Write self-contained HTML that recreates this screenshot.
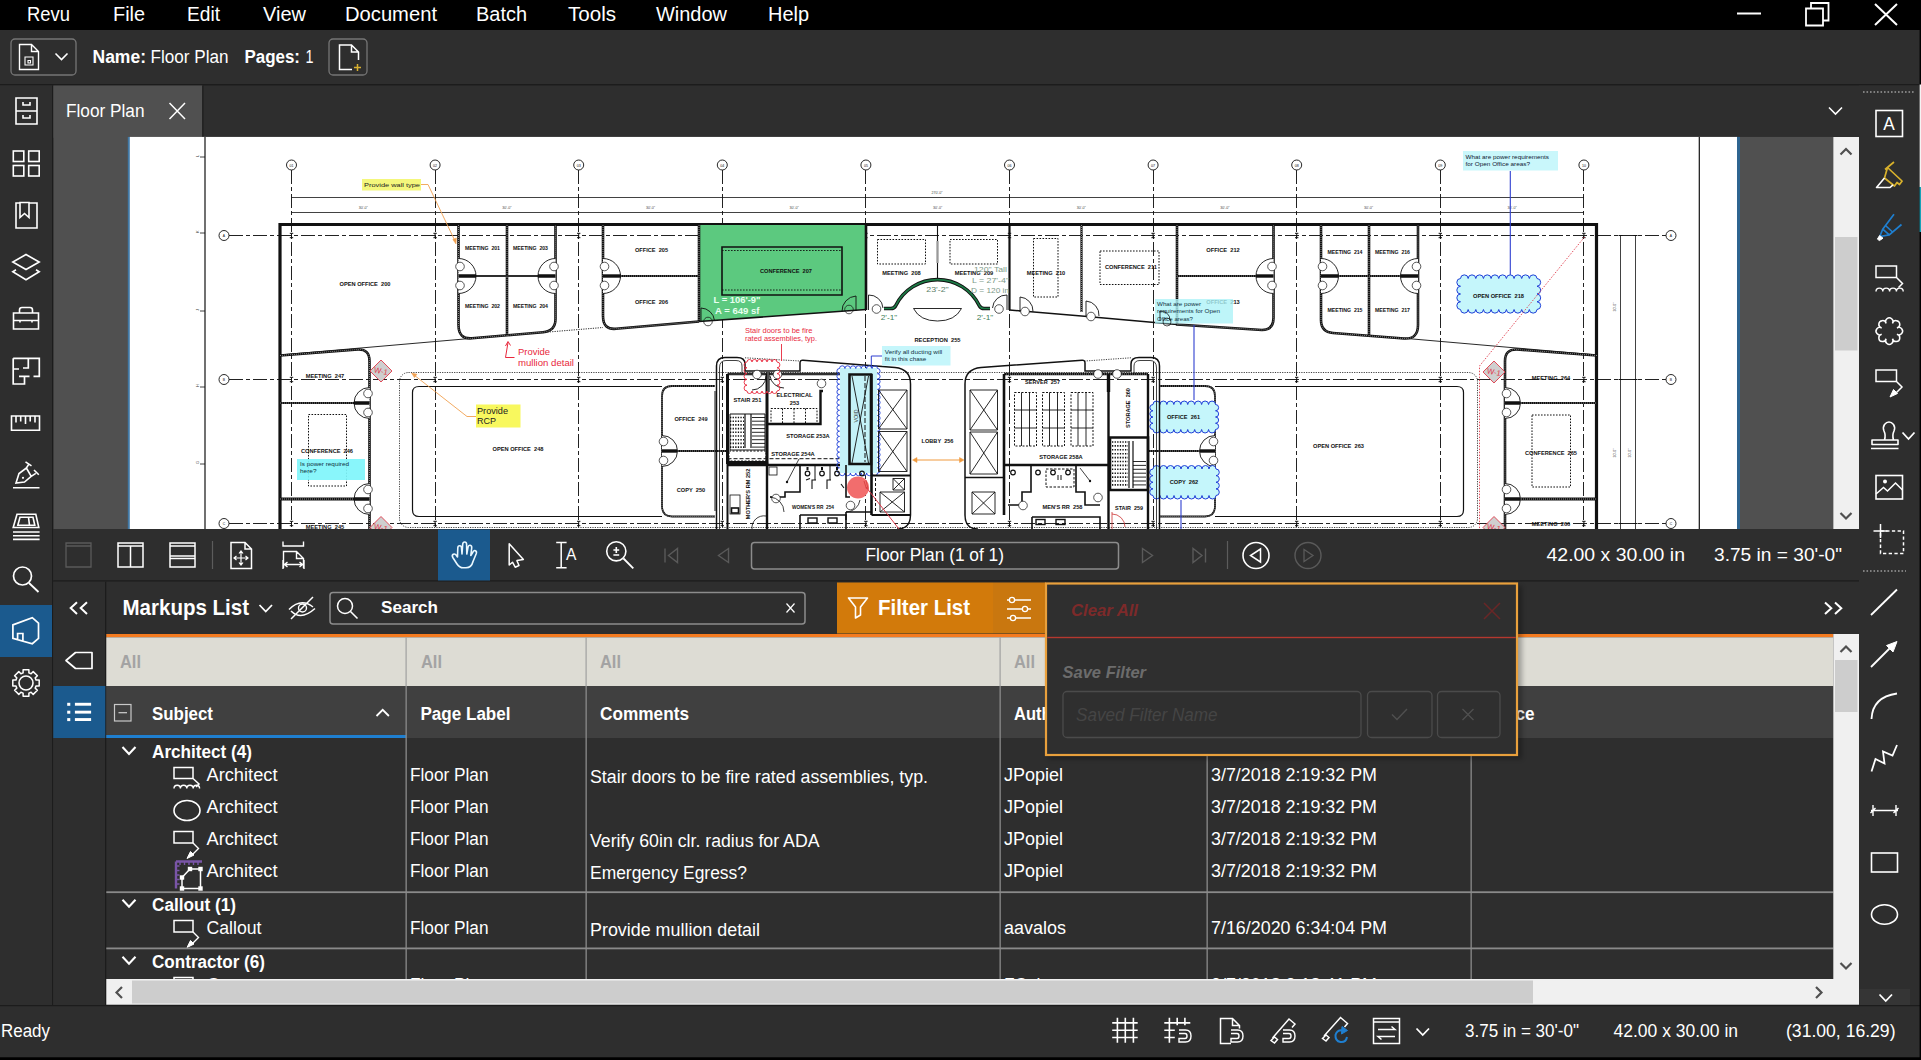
<!DOCTYPE html>
<html lang="en"><head><meta charset="utf-8"><title>Revu - Floor Plan</title>
<style>
html,body{margin:0;padding:0;background:#2e2e2e;overflow:hidden;font-family:"Liberation Sans",sans-serif;}
#app{position:absolute;left:0;top:0;width:1921px;height:1060px;overflow:hidden;}
svg text{white-space:pre;}
</style></head><body><div id="app">
<svg width="1921" height="1060" viewBox="0 0 1921 1060" font-family='"Liberation Sans", sans-serif' style="display:block">
<defs>
<clipPath id="docclip"><rect x="53.3" y="136.7" width="1780" height="392.3"/></clipPath>
<clipPath id="rowclip"><rect x="106" y="738" width="1727" height="241"/></clipPath>
<filter id="blur" x="-5%" y="-5%" width="110%" height="115%"><feGaussianBlur stdDeviation="2.5"/></filter>
</defs>
<rect x="0" y="0" width="1921" height="1060" fill="#2e2e2e" />
<g id="menubar"><rect x="0" y="0" width="1921" height="30" fill="#000" />
<text x="27" y="21" font-size="20.5" fill="#fff" textLength="43" lengthAdjust="spacingAndGlyphs">Revu</text>
<text x="113" y="21" font-size="20.5" fill="#fff" textLength="32" lengthAdjust="spacingAndGlyphs">File</text>
<text x="187" y="21" font-size="20.5" fill="#fff" textLength="33" lengthAdjust="spacingAndGlyphs">Edit</text>
<text x="263" y="21" font-size="20.5" fill="#fff" textLength="43" lengthAdjust="spacingAndGlyphs">View</text>
<text x="345" y="21" font-size="20.5" fill="#fff" textLength="92" lengthAdjust="spacingAndGlyphs">Document</text>
<text x="476" y="21" font-size="20.5" fill="#fff" textLength="51" lengthAdjust="spacingAndGlyphs">Batch</text>
<text x="568" y="21" font-size="20.5" fill="#fff" textLength="48" lengthAdjust="spacingAndGlyphs">Tools</text>
<text x="656" y="21" font-size="20.5" fill="#fff" textLength="71" lengthAdjust="spacingAndGlyphs">Window</text>
<text x="768" y="21" font-size="20.5" fill="#fff" textLength="41" lengthAdjust="spacingAndGlyphs">Help</text>
<line x1="1737" y1="13.5" x2="1761" y2="13.5" stroke="#fff" stroke-width="2" />
<path d="M1806 8.5 h17 v17 h-17 z M1811 8 v-5 h17.5 v17.5 h-5" stroke="#fff" stroke-width="1.8" fill="none" />
<path d="M1875 4 L1897 25 M1897 4 L1875 25" stroke="#fff" stroke-width="2" fill="none" /></g>
<g id="toolbar"><rect x="0" y="30" width="1921" height="54" fill="#2e2e2e" />
<rect x="0" y="84" width="1921" height="1.5" fill="#1c1c1c" />
<rect x="11" y="39" width="65" height="36" fill="none" rx="4" stroke="#767676" stroke-width="1.3"/>
<path d="M19.5 44.5 h12 l7 7 v18 h-19 z M31.5 44.5 v7 h7" stroke="#fff" stroke-width="1.4" fill="none" />
<path d="M25 57 h8 v8 h-8 z M28 60.5 h2.5 v2.5 h-2.5 z" stroke="#fff" stroke-width="1.1" fill="none" />
<path d="M55.5 53.5 l6 6 l6 -6" stroke="#fff" stroke-width="1.6" fill="none" />
<text x="92.5" y="62.8" font-size="18" fill="#fff" textLength="53.5" lengthAdjust="spacingAndGlyphs" font-weight="bold">Name:</text>
<text x="150.5" y="62.8" font-size="18" fill="#fff" textLength="78" lengthAdjust="spacingAndGlyphs">Floor Plan</text>
<text x="244.5" y="62.8" font-size="18" fill="#fff" textLength="55.5" lengthAdjust="spacingAndGlyphs" font-weight="bold">Pages:</text>
<text x="305.5" y="62.8" font-size="18" fill="#fff" textLength="8" lengthAdjust="spacingAndGlyphs">1</text>
<rect x="329" y="39" width="38" height="36" fill="none" rx="4" stroke="#767676" stroke-width="1.3"/>
<path d="M339.5 45 h12 l7 7 v17.5 h-19 z M351.5 45 v7 h7" stroke="#fff" stroke-width="1.5" fill="none" />
<rect x="352" y="60" width="8" height="12" fill="#2e2e2e" />
<path d="M357.5 64 v7 M354 67.5 h7" stroke="#d8b030" stroke-width="1.5" fill="none" /></g>
<g id="leftbar"><rect x="0" y="85.5" width="52" height="920" fill="#2e2e2e" />
<rect x="52" y="85.5" width="1.3" height="920" fill="#1c1c1c" />
<rect x="0" y="605" width="52" height="52" fill="#1b5a8e" />
<path d="M16 98 h21 v26 h-21 z M16 111 h21 M23 102 v3 h7 v-3 M23 115 v3 h7 v-3" stroke="#fff" stroke-width="1.6" fill="none" />
<rect x="13.3" y="151" width="10.5" height="10.5" fill="none" stroke="#fff" stroke-width="1.6"/>
<rect x="28.7" y="151" width="10.5" height="10.5" fill="none" stroke="#fff" stroke-width="1.6"/>
<rect x="13.3" y="165.5" width="10.5" height="10.5" fill="none" stroke="#fff" stroke-width="1.6"/>
<rect x="28.7" y="165.5" width="10.5" height="10.5" fill="none" stroke="#fff" stroke-width="1.6"/>
<path d="M20 203 h-4 v25 h21 v-25 h-8 M20 202.5 v15 l4.5 -4 l4.5 4 v-15 z" stroke="#fff" stroke-width="1.6" fill="none" />
<path d="M26 254.5 l13.2 7.5 l-13.2 7.5 l-13.2 -7.5 z M16 269.8 l-3.2 1.9 l13.2 8 l13.2 -8 l-3.2 -1.9" stroke="#fff" stroke-width="1.6" fill="none" />
<path d="M13.5 313 h25 v16 h-25 z M19.5 313 v-3 q0 -2.5 2.5 -2.5 h8 q2.5 0 2.5 2.5 v3 M13.5 320.5 h25 M20 320.5 v2 M32 320.5 v2" stroke="#fff" stroke-width="1.6" fill="none" />
<path d="M13.2 358.3 H39.3 V376.3 H33.5 M29.5 376.3 H19 M24.5 376.3 V384 H13.2 V358.3 M28.3 358.3 V368 H23 M13.2 369 H19" stroke="#fff" stroke-width="1.7" fill="none" />
<path d="M11.5 416 h28 v14.3 h-28 z M16 416 v6.5 M20.7 416 v5.5 M25.5 416 v8 M30.2 416 v5.5 M35 416 v6.5" stroke="#fff" stroke-width="1.6" fill="none" />
<path d="M13 487.8 h26.5 M16 483 L19 473.6 L26.4 468 L31.2 476.4 L24.5 482 Z M26.4 468 L29 463.8 M25.5 461.8 L31.5 465.8 M31.2 476.4 L35.8 473.3 M34 470 L38.8 474.8" stroke="#fff" stroke-width="1.6" fill="none" />
<circle cx="23" cy="477.8" r="1.1" fill="#fff"/>
<path d="M17 514.3 h18.8 l3 13.2 h-25.6 z M20 517.3 h13 l1.8 8 h-17 z M28.5 517.3 l1 8 M13 532 h26.6 M13 535.8 h26.6 M13 539.4 h26.6" stroke="#fff" stroke-width="1.6" fill="none" />
<circle cx="22.5" cy="576" r="9" fill="none" stroke="#fff" stroke-width="1.7"/>
<line x1="29" y1="583" x2="38.5" y2="592" stroke="#fff" stroke-width="1.8" />
<path d="M12.9 624.9 L32.3 617.7 L38.5 623.1 V638.3 L32.3 643.7 L12.9 638.3 Z M17.6 639.5 V633.5 H22.9 V641" stroke="#fff" stroke-width="1.7" fill="none" />
<path d="M23.1 669.8 L28.9 669.8 L28.9 672.9 L31.1 673.8 L33.2 671.6 L37.4 675.8 L35.2 677.9 L36.1 680.1 L39.2 680.1 L39.2 685.9 L36.1 685.9 L35.2 688.1 L37.4 690.2 L33.2 694.4 L31.1 692.2 L28.9 693.1 L28.9 696.2 L23.1 696.2 L23.1 693.1 L20.9 692.2 L18.8 694.4 L14.6 690.2 L16.8 688.1 L15.9 685.9 L12.8 685.9 L12.8 680.1 L15.9 680.1 L16.8 677.9 L14.6 675.8 L18.8 671.6 L20.9 673.8 L23.1 672.9 Z" stroke="#fff" stroke-width="1.5" fill="none" stroke-linejoin="round"/>
<circle cx="26" cy="683" r="7" fill="none" stroke="#fff" stroke-width="1.6"/></g>
<g id="tabs"><rect x="53.3" y="85.5" width="149" height="52" fill="#505050" />
<rect x="202.3" y="85.5" width="1.2" height="51.5" fill="#1c1c1c" />
<text x="66" y="116.6" font-size="18" fill="#fff" textLength="78.5" lengthAdjust="spacingAndGlyphs">Floor Plan</text>
<path d="M169.5 103 L185 119 M185 103 L169.5 119" stroke="#fff" stroke-width="1.5" fill="none" />
<path d="M1829 107.5 l6.5 6.5 l6.5 -6.5" stroke="#fff" stroke-width="1.6" fill="none" /></g>
<g id="document" clip-path="url(#docclip)" font-family='"Liberation Sans", sans-serif'><rect x="53.3" y="136.7" width="1780" height="392.3" fill="#505050" />
<rect x="127.8" y="136.7" width="3" height="392.3" fill="#4179a6" />
<rect x="1736" y="136.7" width="4" height="392.3" fill="#2f6590" />
<rect x="129.8" y="136.7" width="1607.2" height="392.3" fill="#fff" />
<line x1="205" y1="137" x2="205" y2="529" stroke="#111" stroke-width="1.2" />
<line x1="1699.3" y1="137" x2="1699.3" y2="529" stroke="#111" stroke-width="1.2" />
<line x1="200" y1="157" x2="205" y2="157" stroke="#111" stroke-width="0.8" />
<text x="197" y="155" font-size="4" fill="#333" transform="rotate(-90 199 155)">L</text>
<line x1="200" y1="233" x2="205" y2="233" stroke="#111" stroke-width="0.8" />
<text x="197" y="231" font-size="4" fill="#333" transform="rotate(-90 199 231)">K</text>
<line x1="200" y1="311" x2="205" y2="311" stroke="#111" stroke-width="0.8" />
<text x="197" y="309" font-size="4" fill="#333" transform="rotate(-90 199 309)">J</text>
<line x1="200" y1="387" x2="205" y2="387" stroke="#111" stroke-width="0.8" />
<text x="197" y="385" font-size="4" fill="#333" transform="rotate(-90 199 385)">H</text>
<line x1="200" y1="464" x2="205" y2="464" stroke="#111" stroke-width="0.8" />
<text x="197" y="462" font-size="4" fill="#333" transform="rotate(-90 199 462)">G</text>
<circle cx="291.5" cy="165" r="5" fill="#fff" stroke="#111" stroke-width="0.9"/>
<text x="291.5" y="166.5" font-size="3.6" fill="#111" text-anchor="middle">01</text>
<line x1="291.5" y1="170" x2="291.5" y2="529" stroke="#222" stroke-width="1" stroke-dasharray="14 3 4 3" shape-rendering="crispEdges"/>
<circle cx="435.1" cy="165" r="5" fill="#fff" stroke="#111" stroke-width="0.9"/>
<text x="435.1" y="166.5" font-size="3.6" fill="#111" text-anchor="middle">02</text>
<line x1="435.1" y1="170" x2="435.1" y2="529" stroke="#222" stroke-width="1" stroke-dasharray="14 3 4 3" shape-rendering="crispEdges"/>
<circle cx="578.7" cy="165" r="5" fill="#fff" stroke="#111" stroke-width="0.9"/>
<text x="578.7" y="166.5" font-size="3.6" fill="#111" text-anchor="middle">03</text>
<line x1="578.7" y1="170" x2="578.7" y2="529" stroke="#222" stroke-width="1" stroke-dasharray="14 3 4 3" shape-rendering="crispEdges"/>
<circle cx="722.3" cy="165" r="5" fill="#fff" stroke="#111" stroke-width="0.9"/>
<text x="722.3" y="166.5" font-size="3.6" fill="#111" text-anchor="middle">04</text>
<line x1="722.3" y1="170" x2="722.3" y2="529" stroke="#222" stroke-width="1" stroke-dasharray="14 3 4 3" shape-rendering="crispEdges"/>
<circle cx="865.9" cy="165" r="5" fill="#fff" stroke="#111" stroke-width="0.9"/>
<text x="865.9" y="166.5" font-size="3.6" fill="#111" text-anchor="middle">05</text>
<line x1="865.9" y1="170" x2="865.9" y2="529" stroke="#222" stroke-width="1" stroke-dasharray="14 3 4 3" shape-rendering="crispEdges"/>
<circle cx="1009.5" cy="165" r="5" fill="#fff" stroke="#111" stroke-width="0.9"/>
<text x="1009.5" y="166.5" font-size="3.6" fill="#111" text-anchor="middle">06</text>
<line x1="1009.5" y1="170" x2="1009.5" y2="529" stroke="#222" stroke-width="1" stroke-dasharray="14 3 4 3" shape-rendering="crispEdges"/>
<circle cx="1153.1" cy="165" r="5" fill="#fff" stroke="#111" stroke-width="0.9"/>
<text x="1153.1" y="166.5" font-size="3.6" fill="#111" text-anchor="middle">07</text>
<line x1="1153.1" y1="170" x2="1153.1" y2="529" stroke="#222" stroke-width="1" stroke-dasharray="14 3 4 3" shape-rendering="crispEdges"/>
<circle cx="1296.7" cy="165" r="5" fill="#fff" stroke="#111" stroke-width="0.9"/>
<text x="1296.6999999999998" y="166.5" font-size="3.6" fill="#111" text-anchor="middle">08</text>
<line x1="1296.6999999999998" y1="170" x2="1296.6999999999998" y2="529" stroke="#222" stroke-width="1" stroke-dasharray="14 3 4 3" shape-rendering="crispEdges"/>
<circle cx="1440.3" cy="165" r="5" fill="#fff" stroke="#111" stroke-width="0.9"/>
<text x="1440.3" y="166.5" font-size="3.6" fill="#111" text-anchor="middle">09</text>
<line x1="1440.3" y1="170" x2="1440.3" y2="529" stroke="#222" stroke-width="1" stroke-dasharray="14 3 4 3" shape-rendering="crispEdges"/>
<circle cx="1583.9" cy="165" r="5" fill="#fff" stroke="#111" stroke-width="0.9"/>
<text x="1583.8999999999999" y="166.5" font-size="3.6" fill="#111" text-anchor="middle">10</text>
<line x1="1583.8999999999999" y1="170" x2="1583.8999999999999" y2="529" stroke="#222" stroke-width="1" stroke-dasharray="14 3 4 3" shape-rendering="crispEdges"/>
<line x1="291.5" y1="197.5" x2="1583.8999999999999" y2="197.5" stroke="#111" stroke-width="0.8" />
<line x1="291.5" y1="212.5" x2="1583.8999999999999" y2="212.5" stroke="#111" stroke-width="0.8" />
<text x="363.3" y="208.5" font-size="3.6" fill="#444" text-anchor="middle">30&#x27;-0&quot;</text>
<text x="506.90000000000003" y="208.5" font-size="3.6" fill="#444" text-anchor="middle">30&#x27;-0&quot;</text>
<text x="650.5" y="208.5" font-size="3.6" fill="#444" text-anchor="middle">30&#x27;-0&quot;</text>
<text x="794.0999999999999" y="208.5" font-size="3.6" fill="#444" text-anchor="middle">30&#x27;-0&quot;</text>
<text x="937.7" y="208.5" font-size="3.6" fill="#444" text-anchor="middle">30&#x27;-0&quot;</text>
<text x="1081.3" y="208.5" font-size="3.6" fill="#444" text-anchor="middle">30&#x27;-0&quot;</text>
<text x="1224.8999999999999" y="208.5" font-size="3.6" fill="#444" text-anchor="middle">30&#x27;-0&quot;</text>
<text x="1368.5" y="208.5" font-size="3.6" fill="#444" text-anchor="middle">30&#x27;-0&quot;</text>
<text x="1512.1" y="208.5" font-size="3.6" fill="#444" text-anchor="middle">30&#x27;-0&quot;</text>
<text x="937" y="193.5" font-size="3.6" fill="#444" text-anchor="middle">270&#x27;-0&quot;</text>
<circle cx="224" cy="235.5" r="5" fill="#fff" stroke="#111" stroke-width="0.9"/>
<text x="224" y="236.8" font-size="3.4" fill="#111" text-anchor="middle">A</text>
<circle cx="1671" cy="235.5" r="5" fill="#fff" stroke="#111" stroke-width="0.9"/>
<text x="1671" y="236.8" font-size="3.4" fill="#111" text-anchor="middle">A</text>
<line x1="229" y1="235.5" x2="1666" y2="235.5" stroke="#222" stroke-width="1" stroke-dasharray="14 3 4 3" shape-rendering="crispEdges"/>
<path d="M289.8 233.3 h3.4 M289.8 237.7 h3.4 M291.5 233.3 v4.4" stroke="#111" stroke-width="1" fill="none" />
<path d="M433.4 233.3 h3.4 M433.4 237.7 h3.4 M435.1 233.3 v4.4" stroke="#111" stroke-width="1" fill="none" />
<path d="M577.0 233.3 h3.4 M577.0 237.7 h3.4 M578.7 233.3 v4.4" stroke="#111" stroke-width="1" fill="none" />
<path d="M720.6 233.3 h3.4 M720.6 237.7 h3.4 M722.3 233.3 v4.4" stroke="#111" stroke-width="1" fill="none" />
<path d="M864.2 233.3 h3.4 M864.2 237.7 h3.4 M865.9 233.3 v4.4" stroke="#111" stroke-width="1" fill="none" />
<path d="M1007.8 233.3 h3.4 M1007.8 237.7 h3.4 M1009.5 233.3 v4.4" stroke="#111" stroke-width="1" fill="none" />
<path d="M1151.4 233.3 h3.4 M1151.4 237.7 h3.4 M1153.1 233.3 v4.4" stroke="#111" stroke-width="1" fill="none" />
<path d="M1295.0 233.3 h3.4 M1295.0 237.7 h3.4 M1296.7 233.3 v4.4" stroke="#111" stroke-width="1" fill="none" />
<path d="M1438.6 233.3 h3.4 M1438.6 237.7 h3.4 M1440.3 233.3 v4.4" stroke="#111" stroke-width="1" fill="none" />
<path d="M1582.2 233.3 h3.4 M1582.2 237.7 h3.4 M1583.9 233.3 v4.4" stroke="#111" stroke-width="1" fill="none" />
<circle cx="224" cy="379.5" r="5" fill="#fff" stroke="#111" stroke-width="0.9"/>
<text x="224" y="380.8" font-size="3.4" fill="#111" text-anchor="middle">B</text>
<circle cx="1671" cy="379.5" r="5" fill="#fff" stroke="#111" stroke-width="0.9"/>
<text x="1671" y="380.8" font-size="3.4" fill="#111" text-anchor="middle">B</text>
<line x1="229" y1="379.5" x2="1666" y2="379.5" stroke="#222" stroke-width="1" stroke-dasharray="14 3 4 3" shape-rendering="crispEdges"/>
<path d="M289.8 377.3 h3.4 M289.8 381.7 h3.4 M291.5 377.3 v4.4" stroke="#111" stroke-width="1" fill="none" />
<path d="M433.4 377.3 h3.4 M433.4 381.7 h3.4 M435.1 377.3 v4.4" stroke="#111" stroke-width="1" fill="none" />
<path d="M577.0 377.3 h3.4 M577.0 381.7 h3.4 M578.7 377.3 v4.4" stroke="#111" stroke-width="1" fill="none" />
<path d="M720.6 377.3 h3.4 M720.6 381.7 h3.4 M722.3 377.3 v4.4" stroke="#111" stroke-width="1" fill="none" />
<path d="M864.2 377.3 h3.4 M864.2 381.7 h3.4 M865.9 377.3 v4.4" stroke="#111" stroke-width="1" fill="none" />
<path d="M1007.8 377.3 h3.4 M1007.8 381.7 h3.4 M1009.5 377.3 v4.4" stroke="#111" stroke-width="1" fill="none" />
<path d="M1151.4 377.3 h3.4 M1151.4 381.7 h3.4 M1153.1 377.3 v4.4" stroke="#111" stroke-width="1" fill="none" />
<path d="M1295.0 377.3 h3.4 M1295.0 381.7 h3.4 M1296.7 377.3 v4.4" stroke="#111" stroke-width="1" fill="none" />
<path d="M1438.6 377.3 h3.4 M1438.6 381.7 h3.4 M1440.3 377.3 v4.4" stroke="#111" stroke-width="1" fill="none" />
<path d="M1582.2 377.3 h3.4 M1582.2 381.7 h3.4 M1583.9 377.3 v4.4" stroke="#111" stroke-width="1" fill="none" />
<circle cx="224" cy="523.5" r="5" fill="#fff" stroke="#111" stroke-width="0.9"/>
<text x="224" y="524.8" font-size="3.4" fill="#111" text-anchor="middle">C</text>
<circle cx="1671" cy="523.5" r="5" fill="#fff" stroke="#111" stroke-width="0.9"/>
<text x="1671" y="524.8" font-size="3.4" fill="#111" text-anchor="middle">C</text>
<line x1="229" y1="523.5" x2="1666" y2="523.5" stroke="#222" stroke-width="1" stroke-dasharray="14 3 4 3" shape-rendering="crispEdges"/>
<path d="M289.8 521.3 h3.4 M289.8 525.7 h3.4 M291.5 521.3 v4.4" stroke="#111" stroke-width="1" fill="none" />
<path d="M433.4 521.3 h3.4 M433.4 525.7 h3.4 M435.1 521.3 v4.4" stroke="#111" stroke-width="1" fill="none" />
<path d="M577.0 521.3 h3.4 M577.0 525.7 h3.4 M578.7 521.3 v4.4" stroke="#111" stroke-width="1" fill="none" />
<path d="M720.6 521.3 h3.4 M720.6 525.7 h3.4 M722.3 521.3 v4.4" stroke="#111" stroke-width="1" fill="none" />
<path d="M864.2 521.3 h3.4 M864.2 525.7 h3.4 M865.9 521.3 v4.4" stroke="#111" stroke-width="1" fill="none" />
<path d="M1007.8 521.3 h3.4 M1007.8 525.7 h3.4 M1009.5 521.3 v4.4" stroke="#111" stroke-width="1" fill="none" />
<path d="M1151.4 521.3 h3.4 M1151.4 525.7 h3.4 M1153.1 521.3 v4.4" stroke="#111" stroke-width="1" fill="none" />
<path d="M1295.0 521.3 h3.4 M1295.0 525.7 h3.4 M1296.7 521.3 v4.4" stroke="#111" stroke-width="1" fill="none" />
<path d="M1438.6 521.3 h3.4 M1438.6 525.7 h3.4 M1440.3 521.3 v4.4" stroke="#111" stroke-width="1" fill="none" />
<path d="M1582.2 521.3 h3.4 M1582.2 525.7 h3.4 M1583.9 521.3 v4.4" stroke="#111" stroke-width="1" fill="none" />
<line x1="1620.5" y1="235.5" x2="1620.5" y2="529" stroke="#111" stroke-width="0.8" />
<line x1="1635.5" y1="235.5" x2="1635.5" y2="529" stroke="#111" stroke-width="0.8" />
<text x="1616" y="307" font-size="3.6" fill="#444" text-anchor="middle" transform="rotate(-90 1616 307)">30&#x27;-0&quot;</text>
<text x="1616" y="453" font-size="3.6" fill="#444" text-anchor="middle" transform="rotate(-90 1616 453)">30&#x27;-0&quot;</text>
<text x="1631" y="453" font-size="3.6" fill="#444" text-anchor="middle" transform="rotate(-90 1631 453)">30&#x27;-0&quot;</text>
<path d="M1618.5 235.5 h4 M1633.5 235.5 h4" stroke="#111" stroke-width="1.2" fill="none" />
<path d="M1618.5 379.5 h4 M1633.5 379.5 h4" stroke="#111" stroke-width="1.2" fill="none" />
<path d="M1618.5 523.5 h4 M1633.5 523.5 h4" stroke="#111" stroke-width="1.2" fill="none" />
<path d="M280 529 V224.5 H1596.5 V529" stroke="#111" stroke-width="3.2" fill="none" />
<line x1="280" y1="355" x2="470" y2="338.5" stroke="#111" stroke-width="0.9" />
<line x1="545" y1="332.3" x2="603" y2="327.5" stroke="#111" stroke-width="0.9" stroke-dasharray="1.2 1.2"/>
<line x1="1597" y1="355" x2="1407" y2="338.5" stroke="#111" stroke-width="0.9" />
<path d="M458.5 225 V325 Q458.5 339.5 472 338.3 L543 332.2 Q555.5 331 555.5 319 V225" stroke="#111" stroke-width="2.6" fill="none" stroke-linejoin="round"/>
<path d="M458.5 225 V325 Q458.5 339.5 472 338.3 L543 332.2 Q555.5 331 555.5 319 V225" stroke="#bbb" stroke-width="0.7" fill="none" stroke-dasharray="1 1"/>
<path d="M507 225 V336" stroke="#111" stroke-width="2.6" fill="none" stroke-linejoin="round"/>
<path d="M507 225 V336" stroke="#bbb" stroke-width="0.7" fill="none" stroke-dasharray="1 1"/>
<path d="M458.5 276 H555.5" stroke="#111" stroke-width="2.2" fill="none" stroke-linejoin="round"/>
<path d="M458.5 276 H555.5" stroke="#bbb" stroke-width="0.7" fill="none" stroke-dasharray="1 1"/>
<path d="M458.5 258.5 A17.5 17.5 0 0 1 458.5 293.5" stroke="#111" stroke-width="0.9" fill="#fff" />
<circle cx="460.0" cy="266.5" r="4.3" fill="#fff" stroke="#111" stroke-width="0.7"/>
<circle cx="460.0" cy="285.5" r="4.3" fill="#fff" stroke="#111" stroke-width="0.7"/>
<path d="M555.5 258.5 A17.5 17.5 0 0 0 555.5 293.5" stroke="#111" stroke-width="0.9" fill="#fff" />
<circle cx="554.0" cy="266.5" r="4.3" fill="#fff" stroke="#111" stroke-width="0.7"/>
<circle cx="554.0" cy="285.5" r="4.3" fill="#fff" stroke="#111" stroke-width="0.7"/>
<path d="M458.5 276 H476 M555.5 276 H538" stroke="#111" stroke-width="3.4" fill="none" />
<text x="482.5" y="249.5" font-size="5" fill="#111" textLength="35" lengthAdjust="spacingAndGlyphs" font-weight="bold" text-anchor="middle">MEETING  201</text>
<text x="530.5" y="249.5" font-size="5" fill="#111" textLength="35" lengthAdjust="spacingAndGlyphs" font-weight="bold" text-anchor="middle">MEETING  203</text>
<text x="482.5" y="307.5" font-size="5" fill="#111" textLength="35" lengthAdjust="spacingAndGlyphs" font-weight="bold" text-anchor="middle">MEETING  202</text>
<text x="530.5" y="307.5" font-size="5" fill="#111" textLength="35" lengthAdjust="spacingAndGlyphs" font-weight="bold" text-anchor="middle">MEETING  204</text>
<text x="365" y="286" font-size="5.2" fill="#111" textLength="51" lengthAdjust="spacingAndGlyphs" font-weight="bold" text-anchor="middle">OPEN OFFICE  200</text>
<path d="M603 225 V316 Q603 330 616 328.8 L699 321.5" stroke="#111" stroke-width="2.6" fill="none" stroke-linejoin="round"/>
<path d="M603 225 V316 Q603 330 616 328.8 L699 321.5" stroke="#bbb" stroke-width="0.7" fill="none" stroke-dasharray="1 1"/>
<path d="M603 276 H699" stroke="#111" stroke-width="2.2" fill="none" stroke-linejoin="round"/>
<path d="M603 276 H699" stroke="#bbb" stroke-width="0.7" fill="none" stroke-dasharray="1 1"/>
<path d="M603 258.5 A17.5 17.5 0 0 1 603 293.5" stroke="#111" stroke-width="0.9" fill="#fff" />
<circle cx="604.5" cy="266.5" r="4.3" fill="#fff" stroke="#111" stroke-width="0.7"/>
<circle cx="604.5" cy="285.5" r="4.3" fill="#fff" stroke="#111" stroke-width="0.7"/>
<path d="M603 276 H621" stroke="#111" stroke-width="3.4" fill="none" />
<text x="651.5" y="251.5" font-size="5.2" fill="#111" textLength="33" lengthAdjust="spacingAndGlyphs" font-weight="bold" text-anchor="middle">OFFICE  205</text>
<text x="651.5" y="303.5" font-size="5.2" fill="#111" textLength="33" lengthAdjust="spacingAndGlyphs" font-weight="bold" text-anchor="middle">OFFICE  206</text>
<path d="M699 225 H866 V309.5 L699 321.5 Z" stroke="none" stroke-width="0" fill="#5cc97f" />
<path d="M699 225 V321.5" stroke="#111" stroke-width="2.6" fill="none" stroke-linejoin="round"/>
<path d="M699 225 V321.5" stroke="#bbb" stroke-width="0.7" fill="none" stroke-dasharray="1 1"/>
<path d="M699 321.5 L866 309.5" stroke="#111" stroke-width="1.6" fill="none" />
<path d="M722 247 H842 V295 H722 Z" stroke="#111" stroke-width="1.6" fill="none" />
<path d="M722 250.5 H842 M722 290 H842" stroke="#111" stroke-width="0.9" fill="none" stroke-dasharray="1.6 1.4"/>
<text x="786" y="273.3" font-size="5.4" fill="#111" textLength="52" lengthAdjust="spacingAndGlyphs" font-weight="bold" text-anchor="middle">CONFERENCE  207</text>
<text x="713.5" y="303" font-size="8.3" fill="#e8fff0" textLength="47" lengthAdjust="spacingAndGlyphs" font-weight="bold">L = 106&#x27;-9&quot;</text>
<text x="715" y="313.8" font-size="8.3" fill="#e8fff0" textLength="44.5" lengthAdjust="spacingAndGlyphs" font-weight="bold">A = 649 sf</text>
<path d="M701 322 V308 A14 14 0 0 1 714.5 320.5" stroke="#111" stroke-width="0.9" fill="none" />
<circle cx="708" cy="321.5" r="4.3" fill="none" stroke="#111" stroke-width="0.7"/>
<path d="M856 311 V296 A15 15 0 0 0 842 311.5" stroke="#111" stroke-width="0.9" fill="none" />
<circle cx="849" cy="309.5" r="4.3" fill="none" stroke="#111" stroke-width="0.7"/>
<path d="M866 225 V310" stroke="#111" stroke-width="2.6" fill="none" />
<path d="M1009.5 225 V310" stroke="#111" stroke-width="2.2" fill="none" />
<path d="M937.5 225 V279" stroke="#111" stroke-width="1.1" fill="none" />
<path d="M937.5 241 V263" stroke="#999" stroke-width="2.2" fill="none" />
<path d="M1081.5 225 V312" stroke="#111" stroke-width="2.2" fill="none" stroke-linejoin="round"/>
<path d="M1081.5 225 V312" stroke="#bbb" stroke-width="0.7" fill="none" stroke-dasharray="1 1"/>
<rect x="877.5" y="239.5" width="48.0" height="24.5" fill="none" stroke="#111" stroke-width="1" stroke-dasharray="1.6 1.4"/>
<rect x="950" y="239.5" width="47.5" height="24.5" fill="none" stroke="#111" stroke-width="1" stroke-dasharray="1.6 1.4"/>
<rect x="1033.5" y="238.5" width="24.5" height="58.5" fill="none" stroke="#111" stroke-width="1" stroke-dasharray="1.6 1.4"/>
<rect x="1100" y="251" width="59" height="33.5" fill="none" stroke="#111" stroke-width="1" stroke-dasharray="1.6 1.4"/>
<text x="901.5" y="275" font-size="5.2" fill="#111" textLength="38.5" lengthAdjust="spacingAndGlyphs" font-weight="bold" text-anchor="middle">MEETING  208</text>
<text x="974" y="275" font-size="5.2" fill="#111" textLength="38.5" lengthAdjust="spacingAndGlyphs" font-weight="bold" text-anchor="middle">MEETING  209</text>
<text x="1046" y="275" font-size="5.2" fill="#111" textLength="38.5" lengthAdjust="spacingAndGlyphs" font-weight="bold" text-anchor="middle">MEETING  210</text>
<text x="1131" y="268.5" font-size="5.4" fill="#111" textLength="52" lengthAdjust="spacingAndGlyphs" font-weight="bold" text-anchor="middle">CONFERENCE  211</text>
<path d="M866 309.5 L1009.5 309.5" stroke="none" stroke-width="0" fill="none" />
<path d="M884 308.5 H891 Q894 308.5 895.5 306 A46.6 46.6 0 0 1 979.5 306 Q981 308.5 984 308.5 H990" stroke="#111" stroke-width="3.6" fill="none" stroke-linejoin="round"/>
<path d="M884 308.5 H891 Q894 308.5 895.5 306 A46.6 46.6 0 0 1 979.5 306 Q981 308.5 984 308.5 H990" stroke="#1c7a45" stroke-width="1.6" fill="none" stroke-linejoin="round"/>
<path d="M868.5 310 V295 A14 14 0 0 1 883 308" stroke="#111" stroke-width="0.9" fill="none" />
<circle cx="876.5" cy="309" r="4.3" fill="#fff" stroke="#111" stroke-width="0.7"/>
<path d="M1007 310 V295 A14 14 0 0 0 992.5 308" stroke="#111" stroke-width="0.9" fill="none" />
<circle cx="999" cy="309" r="4.3" fill="#fff" stroke="#111" stroke-width="0.7"/>
<path d="M913.5 308.5 H961.5 Q955 321 937.5 321 Q920 321 913.5 308.5 Z" stroke="#111" stroke-width="0.9" fill="#fff" />
<text x="937.5" y="291.5" font-size="8" fill="#5b8068" textLength="22.5" lengthAdjust="spacingAndGlyphs" text-anchor="middle">23&#x27;-2&quot;</text>
<text x="889" y="319.5" font-size="7.5" fill="#3d7d55" textLength="16.5" lengthAdjust="spacingAndGlyphs" text-anchor="middle">2&#x27;-1&quot;</text>
<text x="985" y="319.5" font-size="7.5" fill="#3d7d55" textLength="16.5" lengthAdjust="spacingAndGlyphs" text-anchor="middle">2&#x27;-1&quot;</text>
<text x="974" y="272" font-size="7.5" fill="#7d9a88" textLength="33" lengthAdjust="spacingAndGlyphs">120&quot; Tall</text>
<text x="972" y="282.5" font-size="7.5" fill="#7d9a88" textLength="37" lengthAdjust="spacingAndGlyphs">L = 27&#x27;-4&quot;</text>
<text x="971" y="292.5" font-size="7.5" fill="#7d9a88" textLength="38" lengthAdjust="spacingAndGlyphs">D = 120 in</text>
<text x="937.5" y="342" font-size="5.4" fill="#111" textLength="46" lengthAdjust="spacingAndGlyphs" font-weight="bold" text-anchor="middle">RECEPTION  255</text>
<path d="M1009.5 310 L1081.5 316 L1177 324.5" stroke="#111" stroke-width="1.6" fill="none" />
<path d="M1020 312 V297 A14 14 0 0 1 1033 311.5" stroke="#111" stroke-width="0.9" fill="none" />
<circle cx="1025" cy="311.5" r="4.3" fill="#fff" stroke="#111" stroke-width="0.7"/>
<path d="M1086 316 V301 A14 14 0 0 1 1099 316" stroke="#111" stroke-width="0.9" fill="none" />
<circle cx="1091" cy="316.5" r="4.3" fill="#fff" stroke="#111" stroke-width="0.7"/>
<path d="M1177 225 V324.5 L1262 330 Q1273.5 330 1273.5 318 V225" stroke="#111" stroke-width="2.6" fill="none" stroke-linejoin="round"/>
<path d="M1177 225 V324.5 L1262 330 Q1273.5 330 1273.5 318 V225" stroke="#bbb" stroke-width="0.7" fill="none" stroke-dasharray="1 1"/>
<path d="M1177 276 H1273.5" stroke="#111" stroke-width="2.2" fill="none" stroke-linejoin="round"/>
<path d="M1177 276 H1273.5" stroke="#bbb" stroke-width="0.7" fill="none" stroke-dasharray="1 1"/>
<path d="M1273.5 258.5 A17.5 17.5 0 0 0 1273.5 293.5" stroke="#111" stroke-width="0.9" fill="#fff" />
<circle cx="1272.0" cy="266.5" r="4.3" fill="#fff" stroke="#111" stroke-width="0.7"/>
<circle cx="1272.0" cy="285.5" r="4.3" fill="#fff" stroke="#111" stroke-width="0.7"/>
<path d="M1273.5 276 H1256" stroke="#111" stroke-width="3.4" fill="none" />
<text x="1223" y="251.5" font-size="5.2" fill="#111" textLength="33.5" lengthAdjust="spacingAndGlyphs" font-weight="bold" text-anchor="middle">OFFICE  212</text>
<text x="1223" y="304" font-size="5.2" fill="#111" textLength="33.5" lengthAdjust="spacingAndGlyphs" font-weight="bold" text-anchor="middle">OFFICE  213</text>
<path d="M1321 225 V320 Q1321 332 1333 333 L1404 338.5 Q1418 339.5 1418 325 V225" stroke="#111" stroke-width="2.6" fill="none" stroke-linejoin="round"/>
<path d="M1321 225 V320 Q1321 332 1333 333 L1404 338.5 Q1418 339.5 1418 325 V225" stroke="#bbb" stroke-width="0.7" fill="none" stroke-dasharray="1 1"/>
<path d="M1369 225 V336" stroke="#111" stroke-width="2.6" fill="none" stroke-linejoin="round"/>
<path d="M1369 225 V336" stroke="#bbb" stroke-width="0.7" fill="none" stroke-dasharray="1 1"/>
<path d="M1321 276 H1418" stroke="#111" stroke-width="2.2" fill="none" stroke-linejoin="round"/>
<path d="M1321 276 H1418" stroke="#bbb" stroke-width="0.7" fill="none" stroke-dasharray="1 1"/>
<path d="M1321 258.5 A17.5 17.5 0 0 1 1321 293.5" stroke="#111" stroke-width="0.9" fill="#fff" />
<circle cx="1322.5" cy="266.5" r="4.3" fill="#fff" stroke="#111" stroke-width="0.7"/>
<circle cx="1322.5" cy="285.5" r="4.3" fill="#fff" stroke="#111" stroke-width="0.7"/>
<path d="M1418 258.5 A17.5 17.5 0 0 0 1418 293.5" stroke="#111" stroke-width="0.9" fill="#fff" />
<circle cx="1416.5" cy="266.5" r="4.3" fill="#fff" stroke="#111" stroke-width="0.7"/>
<circle cx="1416.5" cy="285.5" r="4.3" fill="#fff" stroke="#111" stroke-width="0.7"/>
<path d="M1321 276 H1338.5 M1418 276 H1400.5" stroke="#111" stroke-width="3.4" fill="none" />
<text x="1345" y="254" font-size="5" fill="#111" textLength="35" lengthAdjust="spacingAndGlyphs" font-weight="bold" text-anchor="middle">MEETING  214</text>
<text x="1392.5" y="254" font-size="5" fill="#111" textLength="35" lengthAdjust="spacingAndGlyphs" font-weight="bold" text-anchor="middle">MEETING  216</text>
<text x="1345" y="312" font-size="5" fill="#111" textLength="35" lengthAdjust="spacingAndGlyphs" font-weight="bold" text-anchor="middle">MEETING  215</text>
<text x="1392.5" y="312" font-size="5" fill="#111" textLength="35" lengthAdjust="spacingAndGlyphs" font-weight="bold" text-anchor="middle">MEETING  217</text>
<rect x="1463" y="151" width="95" height="19.5" fill="#c9f7fb" />
<text x="1465.5" y="158.5" font-size="5.4" fill="#123" textLength="83.5" lengthAdjust="spacingAndGlyphs">What are power requirements</text>
<text x="1465.5" y="165.8" font-size="5.4" fill="#123" textLength="64.5" lengthAdjust="spacingAndGlyphs">for Open Office areas?</text>
<line x1="1510.3" y1="171" x2="1510.3" y2="275" stroke="#2f3fd0" stroke-width="1.1" />
<path d="M1460.5 278.5 A3.83 3.83 0 0 1 1468.15 278.50 A3.83 3.83 0 0 1 1475.80 278.50 A3.83 3.83 0 0 1 1483.45 278.50 A3.83 3.83 0 0 1 1491.10 278.50 A3.83 3.83 0 0 1 1498.75 278.50 A3.83 3.83 0 0 1 1506.40 278.50 A3.83 3.83 0 0 1 1514.05 278.50 A3.83 3.83 0 0 1 1521.70 278.50 A3.83 3.83 0 0 1 1529.35 278.50 A3.83 3.83 0 0 1 1537.00 278.50 A3.88 3.88 0 0 1 1537.00 286.25 A3.88 3.88 0 0 1 1537.00 294.00 A3.88 3.88 0 0 1 1537.00 301.75 A3.88 3.88 0 0 1 1537.00 309.50 A3.83 3.83 0 0 1 1529.35 309.50 A3.83 3.83 0 0 1 1521.70 309.50 A3.83 3.83 0 0 1 1514.05 309.50 A3.83 3.83 0 0 1 1506.40 309.50 A3.83 3.83 0 0 1 1498.75 309.50 A3.83 3.83 0 0 1 1491.10 309.50 A3.83 3.83 0 0 1 1483.45 309.50 A3.83 3.83 0 0 1 1475.80 309.50 A3.83 3.83 0 0 1 1468.15 309.50 A3.83 3.83 0 0 1 1460.50 309.50 A3.88 3.88 0 0 1 1460.50 301.75 A3.88 3.88 0 0 1 1460.50 294.00 A3.88 3.88 0 0 1 1460.50 286.25 A3.88 3.88 0 0 1 1460.50 278.50 Z" stroke="#1f3fd8" stroke-width="1" fill="#c5f6fb" />
<text x="1498.5" y="297.8" font-size="5.4" fill="#111" textLength="51" lengthAdjust="spacingAndGlyphs" font-weight="bold" text-anchor="middle">OPEN OFFICE  218</text>
<path d="M1584.5 237 L1479.5 366 V529" stroke="#e03a4a" stroke-width="0.9" fill="none" stroke-dasharray="1.5 1.5"/>
<path d="M280 355.5 L358 349.5 Q369.5 349 369.5 361 V529" stroke="#111" stroke-width="2.6" fill="none" stroke-linejoin="round"/>
<path d="M280 355.5 L358 349.5 Q369.5 349 369.5 361 V529" stroke="#bbb" stroke-width="0.7" fill="none" stroke-dasharray="1 1"/>
<path d="M280 403 H369.5" stroke="#111" stroke-width="2.2" fill="none" stroke-linejoin="round"/>
<path d="M280 403 H369.5" stroke="#bbb" stroke-width="0.7" fill="none" stroke-dasharray="1 1"/>
<path d="M280 499 H369.5" stroke="#111" stroke-width="3" fill="none" stroke-linejoin="round"/>
<path d="M280 499 H369.5" stroke="#bbb" stroke-width="0.7" fill="none" stroke-dasharray="1 1"/>
<path d="M369.5 387.5 A15.5 15.5 0 0 0 369.5 418.5" stroke="#111" stroke-width="0.9" fill="#fff" />
<circle cx="368.0" cy="393.5" r="4.3" fill="#fff" stroke="#111" stroke-width="0.7"/>
<circle cx="368.0" cy="412.5" r="4.3" fill="#fff" stroke="#111" stroke-width="0.7"/>
<path d="M369.5 483.5 A15.5 15.5 0 0 0 369.5 514.5" stroke="#111" stroke-width="0.9" fill="#fff" />
<circle cx="368.0" cy="489.5" r="4.3" fill="#fff" stroke="#111" stroke-width="0.7"/>
<circle cx="368.0" cy="508.5" r="4.3" fill="#fff" stroke="#111" stroke-width="0.7"/>
<path d="M369.5 403 H354 M369.5 499 H354" stroke="#111" stroke-width="3.4" fill="none" />
<text x="325" y="377.5" font-size="5.2" fill="#111" textLength="38.5" lengthAdjust="spacingAndGlyphs" font-weight="bold" text-anchor="middle">MEETING  247</text>
<text x="325" y="529" font-size="5.2" fill="#111" textLength="38.5" lengthAdjust="spacingAndGlyphs" font-weight="bold" text-anchor="middle">MEETING  245</text>
<rect x="308.5" y="414.5" width="38" height="71.5" fill="none" stroke="#111" stroke-width="1" stroke-dasharray="1.6 1.4"/>
<text x="327" y="453" font-size="5.4" fill="#111" textLength="52" lengthAdjust="spacingAndGlyphs" font-weight="bold" text-anchor="middle">CONFERENCE  246</text>
<rect x="297" y="459" width="68" height="21" fill="#7ff5fb" opacity="0.92"/>
<text x="300" y="465.8" font-size="5.4" fill="#134" textLength="49" lengthAdjust="spacingAndGlyphs">Is power required</text>
<text x="300" y="473" font-size="5.4" fill="#134" textLength="16.5" lengthAdjust="spacingAndGlyphs">here?</text>
<path d="M1597 355.5 L1517 349.5 Q1505 349 1505 361 V529" stroke="#111" stroke-width="2.6" fill="none" stroke-linejoin="round"/>
<path d="M1597 355.5 L1517 349.5 Q1505 349 1505 361 V529" stroke="#bbb" stroke-width="0.7" fill="none" stroke-dasharray="1 1"/>
<path d="M1505 403 H1597" stroke="#111" stroke-width="2.2" fill="none" stroke-linejoin="round"/>
<path d="M1505 403 H1597" stroke="#bbb" stroke-width="0.7" fill="none" stroke-dasharray="1 1"/>
<path d="M1505 499 H1597" stroke="#111" stroke-width="3" fill="none" stroke-linejoin="round"/>
<path d="M1505 499 H1597" stroke="#bbb" stroke-width="0.7" fill="none" stroke-dasharray="1 1"/>
<path d="M1505 387.5 A15.5 15.5 0 0 1 1505 418.5" stroke="#111" stroke-width="0.9" fill="#fff" />
<circle cx="1506.5" cy="393.5" r="4.3" fill="#fff" stroke="#111" stroke-width="0.7"/>
<circle cx="1506.5" cy="412.5" r="4.3" fill="#fff" stroke="#111" stroke-width="0.7"/>
<path d="M1505 483.5 A15.5 15.5 0 0 1 1505 514.5" stroke="#111" stroke-width="0.9" fill="#fff" />
<circle cx="1506.5" cy="489.5" r="4.3" fill="#fff" stroke="#111" stroke-width="0.7"/>
<circle cx="1506.5" cy="508.5" r="4.3" fill="#fff" stroke="#111" stroke-width="0.7"/>
<path d="M1505 403 H1520 M1505 499 H1520" stroke="#111" stroke-width="3.4" fill="none" />
<text x="1551" y="380" font-size="5.2" fill="#111" textLength="38.5" lengthAdjust="spacingAndGlyphs" font-weight="bold" text-anchor="middle">MEETING  264</text>
<text x="1551" y="525.5" font-size="5.2" fill="#111" textLength="38.5" lengthAdjust="spacingAndGlyphs" font-weight="bold" text-anchor="middle">MEETING  266</text>
<rect x="1532" y="415" width="38.5" height="72" fill="none" stroke="#111" stroke-width="1" stroke-dasharray="1.6 1.4"/>
<text x="1551" y="455" font-size="5.4" fill="#111" textLength="52" lengthAdjust="spacingAndGlyphs" font-weight="bold" text-anchor="middle">CONFERENCE  265</text>
<path d="M381 360 l11 11 l-11 11 l-11 -11 z" stroke="#e03a4a" stroke-width="0.9" fill="#cfcfcf" />
<text x="381" y="373.8" font-size="7.8" fill="#e03a4a" textLength="14" lengthAdjust="spacingAndGlyphs" text-anchor="middle" transform="rotate(12 381 371)">W-1</text>
<path d="M1494 361 l11 11 l-11 11 l-11 -11 z" stroke="#e03a4a" stroke-width="0.9" fill="#cfcfcf" />
<text x="1494" y="374.8" font-size="7.8" fill="#e03a4a" textLength="14" lengthAdjust="spacingAndGlyphs" text-anchor="middle" transform="rotate(12 1494 372)">W-1</text>
<path d="M381 516.5 l11 11 l-11 11 l-11 -11 z" stroke="#e03a4a" stroke-width="0.9" fill="#cfcfcf" />
<text x="381" y="530.3" font-size="7.8" fill="#e03a4a" textLength="14" lengthAdjust="spacingAndGlyphs" text-anchor="middle" transform="rotate(12 381 527.5)">W-1</text>
<path d="M1494 516.5 l11 11 l-11 11 l-11 -11 z" stroke="#e03a4a" stroke-width="0.9" fill="#cfcfcf" />
<text x="1494" y="530.3" font-size="7.8" fill="#e03a4a" textLength="14" lengthAdjust="spacingAndGlyphs" text-anchor="middle" transform="rotate(12 1494 527.5)">W-1</text>
<rect x="399.5" y="372.5" width="1078" height="155" fill="none" rx="9" stroke="#111" stroke-width="0.8" stroke-dasharray="1.2 1.2"/>
<path d="M662 386.5 H419 Q412.5 386.5 412.5 392.5 V510 Q412.5 516.5 419 516.5 H662" stroke="#111" stroke-width="1.2" fill="none" />
<path d="M1215 386.5 H1457 Q1463.5 386.5 1463.5 392.5 V510 Q1463.5 516.5 1457 516.5 H1215" stroke="#111" stroke-width="1.2" fill="none" />
<text x="518" y="451" font-size="5.4" fill="#111" textLength="51" lengthAdjust="spacingAndGlyphs" font-weight="bold" text-anchor="middle">OPEN OFFICE  248</text>
<text x="1338.5" y="447.5" font-size="5.4" fill="#111" textLength="51" lengthAdjust="spacingAndGlyphs" font-weight="bold" text-anchor="middle">OPEN OFFICE  263</text>
<path d="M715 386 H672 Q662 386 662 396 V506 Q662 516.5 672 516.5 H715" stroke="#111" stroke-width="1.8" fill="none" stroke-linejoin="round"/>
<path d="M715 386 H672 Q662 386 662 396 V506 Q662 516.5 672 516.5 H715" stroke="#bbb" stroke-width="0.7" fill="none" stroke-dasharray="1 1"/>
<path d="M715 391 V511" stroke="#111" stroke-width="1" fill="none" />
<path d="M662 451 H727" stroke="#111" stroke-width="2" fill="none" stroke-linejoin="round"/>
<path d="M662 451 H727" stroke="#bbb" stroke-width="0.7" fill="none" stroke-dasharray="1 1"/>
<path d="M662 435.5 A15.5 15.5 0 0 1 662 466.5" stroke="#111" stroke-width="0.9" fill="#fff" />
<circle cx="663.5" cy="441.5" r="4.3" fill="#fff" stroke="#111" stroke-width="0.7"/>
<circle cx="663.5" cy="460.5" r="4.3" fill="#fff" stroke="#111" stroke-width="0.7"/>
<path d="M662 451 H677" stroke="#111" stroke-width="3.4" fill="none" />
<text x="691" y="420.5" font-size="5.2" fill="#111" textLength="33" lengthAdjust="spacingAndGlyphs" font-weight="bold" text-anchor="middle">OFFICE  249</text>
<text x="691" y="492" font-size="5.2" fill="#111" textLength="28.5" lengthAdjust="spacingAndGlyphs" font-weight="bold" text-anchor="middle">COPY  250</text>
<path d="M1160 386 H1205 Q1215 386 1215 396 V506 Q1215 516.5 1205 516.5 H1160" stroke="#111" stroke-width="1.8" fill="none" stroke-linejoin="round"/>
<path d="M1160 386 H1205 Q1215 386 1215 396 V506 Q1215 516.5 1205 516.5 H1160" stroke="#bbb" stroke-width="0.7" fill="none" stroke-dasharray="1 1"/>
<path d="M1148 451 H1215" stroke="#111" stroke-width="2" fill="none" stroke-linejoin="round"/>
<path d="M1148 451 H1215" stroke="#bbb" stroke-width="0.7" fill="none" stroke-dasharray="1 1"/>
<path d="M1215 435.5 A15.5 15.5 0 0 0 1215 466.5" stroke="#111" stroke-width="0.9" fill="#fff" />
<circle cx="1213.5" cy="441.5" r="4.3" fill="#fff" stroke="#111" stroke-width="0.7"/>
<circle cx="1213.5" cy="460.5" r="4.3" fill="#fff" stroke="#111" stroke-width="0.7"/>
<path d="M1215 451 H1200" stroke="#111" stroke-width="3.4" fill="none" />
<path d="M1153 404.5 A3.47 3.47 0 0 1 1159.94 404.50 A3.47 3.47 0 0 1 1166.89 404.50 A3.47 3.47 0 0 1 1173.83 404.50 A3.47 3.47 0 0 1 1180.78 404.50 A3.47 3.47 0 0 1 1187.72 404.50 A3.47 3.47 0 0 1 1194.67 404.50 A3.47 3.47 0 0 1 1201.61 404.50 A3.47 3.47 0 0 1 1208.56 404.50 A3.47 3.47 0 0 1 1215.50 404.50 A3.12 3.12 0 0 1 1215.50 410.75 A3.12 3.12 0 0 1 1215.50 417.00 A3.12 3.12 0 0 1 1215.50 423.25 A3.12 3.12 0 0 1 1215.50 429.50 A3.47 3.47 0 0 1 1208.56 429.50 A3.47 3.47 0 0 1 1201.61 429.50 A3.47 3.47 0 0 1 1194.67 429.50 A3.47 3.47 0 0 1 1187.72 429.50 A3.47 3.47 0 0 1 1180.78 429.50 A3.47 3.47 0 0 1 1173.83 429.50 A3.47 3.47 0 0 1 1166.89 429.50 A3.47 3.47 0 0 1 1159.94 429.50 A3.47 3.47 0 0 1 1153.00 429.50 A3.12 3.12 0 0 1 1153.00 423.25 A3.12 3.12 0 0 1 1153.00 417.00 A3.12 3.12 0 0 1 1153.00 410.75 A3.12 3.12 0 0 1 1153.00 404.50 Z" stroke="#1f3fd8" stroke-width="1" fill="#c5f6fb" />
<path d="M1153 469 A3.50 3.50 0 0 1 1160.00 469.00 A3.50 3.50 0 0 1 1167.00 469.00 A3.50 3.50 0 0 1 1174.00 469.00 A3.50 3.50 0 0 1 1181.00 469.00 A3.50 3.50 0 0 1 1188.00 469.00 A3.50 3.50 0 0 1 1195.00 469.00 A3.50 3.50 0 0 1 1202.00 469.00 A3.50 3.50 0 0 1 1209.00 469.00 A3.50 3.50 0 0 1 1216.00 469.00 A3.31 3.31 0 0 1 1216.00 475.62 A3.31 3.31 0 0 1 1216.00 482.25 A3.31 3.31 0 0 1 1216.00 488.88 A3.31 3.31 0 0 1 1216.00 495.50 A3.50 3.50 0 0 1 1209.00 495.50 A3.50 3.50 0 0 1 1202.00 495.50 A3.50 3.50 0 0 1 1195.00 495.50 A3.50 3.50 0 0 1 1188.00 495.50 A3.50 3.50 0 0 1 1181.00 495.50 A3.50 3.50 0 0 1 1174.00 495.50 A3.50 3.50 0 0 1 1167.00 495.50 A3.50 3.50 0 0 1 1160.00 495.50 A3.50 3.50 0 0 1 1153.00 495.50 A3.31 3.31 0 0 1 1153.00 488.88 A3.31 3.31 0 0 1 1153.00 482.25 A3.31 3.31 0 0 1 1153.00 475.62 A3.31 3.31 0 0 1 1153.00 469.00 Z" stroke="#1f3fd8" stroke-width="1" fill="#c5f6fb" />
<text x="1183.5" y="418.5" font-size="5.2" fill="#111" textLength="33" lengthAdjust="spacingAndGlyphs" font-weight="bold" text-anchor="middle">OFFICE  261</text>
<text x="1184" y="484" font-size="5.2" fill="#111" textLength="28.5" lengthAdjust="spacingAndGlyphs" font-weight="bold" text-anchor="middle">COPY  262</text>
<line x1="1194" y1="325" x2="1194" y2="400" stroke="#2f3fd0" stroke-width="1.1" />
<line x1="1181" y1="500" x2="1181" y2="529" stroke="#2f3fd0" stroke-width="1.1" />
<rect x="1155" y="299" width="78" height="24.5" fill="#aef2f8" opacity="0.8"/>
<text x="1157" y="306" font-size="5.3" fill="#134" textLength="44" lengthAdjust="spacingAndGlyphs">What are power</text>
<text x="1157" y="313.3" font-size="5.3" fill="#134" textLength="63" lengthAdjust="spacingAndGlyphs">requirements for Open</text>
<text x="1157" y="320.6" font-size="5.3" fill="#134" textLength="36" lengthAdjust="spacingAndGlyphs">Office areas?</text>
<path d="M1160 321 V311 A9 9 0 0 1 1170 320" stroke="#111" stroke-width="0.8" fill="none" />
<circle cx="1167" cy="322" r="4" fill="none" stroke="#111" stroke-width="0.7"/>
<rect x="362" y="179" width="59" height="11.5" fill="#f4f77c" />
<text x="364" y="187.3" font-size="6.2" fill="#222" textLength="56" lengthAdjust="spacingAndGlyphs">Provide wall type</text>
<path d="M421 184.5 H428 L455 241" stroke="#f0a050" stroke-width="0.9" fill="none" />
<path d="M456 244 l-3.2 -4.5 l3.6 -1.6 z" stroke="#f0a050" stroke-width="0.5" fill="#f0a050" />
<rect x="476" y="404.5" width="44.5" height="23" fill="#f8f85e" />
<text x="477" y="414" font-size="8.3" fill="#222" textLength="31" lengthAdjust="spacingAndGlyphs">Provide</text>
<text x="477" y="424" font-size="8.3" fill="#222" textLength="19" lengthAdjust="spacingAndGlyphs">RCP</text>
<path d="M476 416.5 H467 L414 375" stroke="#f0a050" stroke-width="0.9" fill="none" />
<path d="M411.5 373 l5.5 1.2 l-2.6 3.4 z" stroke="#f0a050" stroke-width="0.5" fill="#f0a050" />
<text x="518" y="355" font-size="9.3" fill="#e8283c" textLength="32" lengthAdjust="spacingAndGlyphs">Provide</text>
<text x="518" y="366" font-size="9.3" fill="#e8283c" textLength="56" lengthAdjust="spacingAndGlyphs">mullion detail</text>
<path d="M514.5 357.5 H505.5 L508 342.5 M505.5 346 L508 341.5 L510.5 345.5" stroke="#e8283c" stroke-width="1" fill="none" />
<path d="M716.5 529 V366 Q716.5 357.5 725 357.5 H737 Q745 357.5 745 364 V371 H800 V363 Q800 360 803 360.2 L895 367.5 Q910.5 369 910.5 384 V515 Q910.5 529 897 529" stroke="#111" stroke-width="1.5" fill="none" />
<path d="M719.5 529 V368 Q719.5 360.5 726 360.5 H736 Q742 360.5 742 366 V373.5" stroke="#111" stroke-width="0.8" fill="none" />
<line x1="745" y1="357.8" x2="800" y2="361" stroke="#111" stroke-width="0.8" stroke-dasharray="1.2 1.2"/>
<path d="M727.5 374 H872" stroke="#111" stroke-width="2.4" fill="none" />
<path d="M727.5 374 H872" stroke="#bbb" stroke-width="0.7" fill="none" stroke-dasharray="1 1"/>
<path d="M727.5 374 V462.5 H767 V374" stroke="#111" stroke-width="3" fill="none" />
<path d="M727.5 462.5 V529" stroke="#111" stroke-width="2" fill="none" />
<path d="M767 462.5 V529" stroke="#111" stroke-width="2.4" fill="none" />
<path d="M730 414 H765 V450 H730 Z" stroke="#111" stroke-width="1" fill="none" />
<line x1="730" y1="417.5" x2="744" y2="417.5" stroke="#111" stroke-width="1.6" stroke-dasharray="1.3 1.3"/>
<line x1="752" y1="417.5" x2="765" y2="417.5" stroke="#111" stroke-width="0.9" />
<line x1="730" y1="421.2" x2="744" y2="421.2" stroke="#111" stroke-width="1.6" stroke-dasharray="1.3 1.3"/>
<line x1="752" y1="421.2" x2="765" y2="421.2" stroke="#111" stroke-width="0.9" />
<line x1="730" y1="424.9" x2="744" y2="424.9" stroke="#111" stroke-width="1.6" stroke-dasharray="1.3 1.3"/>
<line x1="752" y1="424.9" x2="765" y2="424.9" stroke="#111" stroke-width="0.9" />
<line x1="730" y1="428.6" x2="744" y2="428.6" stroke="#111" stroke-width="1.6" stroke-dasharray="1.3 1.3"/>
<line x1="752" y1="428.6" x2="765" y2="428.6" stroke="#111" stroke-width="0.9" />
<line x1="730" y1="432.3" x2="744" y2="432.3" stroke="#111" stroke-width="1.6" stroke-dasharray="1.3 1.3"/>
<line x1="752" y1="432.3" x2="765" y2="432.3" stroke="#111" stroke-width="0.9" />
<line x1="730" y1="436.0" x2="744" y2="436.0" stroke="#111" stroke-width="1.6" stroke-dasharray="1.3 1.3"/>
<line x1="752" y1="436.0" x2="765" y2="436.0" stroke="#111" stroke-width="0.9" />
<line x1="730" y1="439.7" x2="744" y2="439.7" stroke="#111" stroke-width="1.6" stroke-dasharray="1.3 1.3"/>
<line x1="752" y1="439.7" x2="765" y2="439.7" stroke="#111" stroke-width="0.9" />
<line x1="730" y1="443.4" x2="744" y2="443.4" stroke="#111" stroke-width="1.6" stroke-dasharray="1.3 1.3"/>
<line x1="752" y1="443.4" x2="765" y2="443.4" stroke="#111" stroke-width="0.9" />
<line x1="730" y1="447.1" x2="744" y2="447.1" stroke="#111" stroke-width="1.6" stroke-dasharray="1.3 1.3"/>
<line x1="752" y1="447.1" x2="765" y2="447.1" stroke="#111" stroke-width="0.9" />
<path d="M745 414 V448 M751 414 V448" stroke="#111" stroke-width="1.2" fill="none" />
<rect x="729" y="451" width="37" height="10" fill="none" stroke="#111" stroke-width="1" stroke-dasharray="2 1.5"/>
<text x="747.5" y="402" font-size="5.4" fill="#111" textLength="28" lengthAdjust="spacingAndGlyphs" font-weight="bold" text-anchor="middle">STAIR 251</text>
<path d="M767 424 H820.5 V391 H823" stroke="#111" stroke-width="2.4" fill="none" />
<rect x="771" y="408.5" width="46" height="15" fill="none" stroke="#111" stroke-width="1" stroke-dasharray="1.8 1.4"/>
<line x1="782.5" y1="408.5" x2="782.5" y2="423.5" stroke="#111" stroke-width="1" stroke-dasharray="1.8 1.4"/>
<line x1="794" y1="408.5" x2="794" y2="423.5" stroke="#111" stroke-width="1" stroke-dasharray="1.8 1.4"/>
<line x1="805.5" y1="408.5" x2="805.5" y2="423.5" stroke="#111" stroke-width="1" stroke-dasharray="1.8 1.4"/>
<text x="794.5" y="397" font-size="5.4" fill="#111" textLength="36" lengthAdjust="spacingAndGlyphs" font-weight="bold" text-anchor="middle">ELECTRICAL</text>
<text x="794.5" y="404.8" font-size="5.4" fill="#111" textLength="9.5" lengthAdjust="spacingAndGlyphs" font-weight="bold" text-anchor="middle">253</text>
<text x="808" y="438" font-size="5.4" fill="#111" textLength="43.5" lengthAdjust="spacingAndGlyphs" font-weight="bold" text-anchor="middle">STORAGE 253A</text>
<text x="793" y="456" font-size="5.4" fill="#111" textLength="43.5" lengthAdjust="spacingAndGlyphs" font-weight="bold" text-anchor="middle">STORAGE 254A</text>
<line x1="727.5" y1="458.7" x2="872" y2="458.7" stroke="#111" stroke-width="1" stroke-dasharray="4 2"/>
<path d="M727.5 465 H872" stroke="#111" stroke-width="2.6" fill="none" />
<path d="M768 374 V389 M766 376 A14 14 0 0 1 752 390" stroke="#111" stroke-width="0.9" fill="none" />
<path d="M770 376 A14 14 0 0 0 784 388" stroke="#111" stroke-width="0.9" fill="none" />
<circle cx="757" cy="374.5" r="4.3" fill="#fff" stroke="#111" stroke-width="0.7"/>
<circle cx="777.5" cy="374.5" r="4.3" fill="#fff" stroke="#111" stroke-width="0.7"/>
<circle cx="821.5" cy="383.5" r="4.3" fill="#fff" stroke="#111" stroke-width="0.7"/>
<path d="M768 372 V392" stroke="#111" stroke-width="3.2" fill="none" />
<path d="M768 372 V392" stroke="#aaa" stroke-width="0.8" fill="none" />
<path d="M747 362 A2.50 2.50 0 0 1 752.00 362.00 A2.50 2.50 0 0 1 757.00 362.00 A2.50 2.50 0 0 1 762.00 362.00 A2.50 2.50 0 0 1 767.00 362.00 A2.50 2.50 0 0 1 772.00 362.00 A2.50 2.50 0 0 1 777.00 362.00 A2.90 2.90 0 0 1 777.00 367.80 A2.90 2.90 0 0 1 777.00 373.60 A2.90 2.90 0 0 1 777.00 379.40 A2.90 2.90 0 0 1 777.00 385.20 A2.90 2.90 0 0 1 777.00 391.00 A2.50 2.50 0 0 1 772.00 391.00 A2.50 2.50 0 0 1 767.00 391.00 A2.50 2.50 0 0 1 762.00 391.00 A2.50 2.50 0 0 1 757.00 391.00 A2.50 2.50 0 0 1 752.00 391.00 A2.50 2.50 0 0 1 747.00 391.00 A2.90 2.90 0 0 1 747.00 385.20 A2.90 2.90 0 0 1 747.00 379.40 A2.90 2.90 0 0 1 747.00 373.60 A2.90 2.90 0 0 1 747.00 367.80 A2.90 2.90 0 0 1 747.00 362.00 Z" stroke="#e8283c" stroke-width="0.9" fill="none" />
<line x1="781.5" y1="344" x2="781.5" y2="361" stroke="#e8283c" stroke-width="0.9" />
<text x="745" y="332.5" font-size="6.9" fill="#e8283c" textLength="67.5" lengthAdjust="spacingAndGlyphs">Stair doors to be fire</text>
<text x="745" y="341" font-size="6.9" fill="#e8283c" textLength="72" lengthAdjust="spacingAndGlyphs">rated assemblies, typ.</text>
<rect x="840" y="368" width="37" height="105" fill="#c5f2f8" />
<path d="M839.5 368.5 A2.71 2.71 0 0 1 844.93 368.50 A2.71 2.71 0 0 1 850.36 368.50 A2.71 2.71 0 0 1 855.79 368.50 A2.71 2.71 0 0 1 861.21 368.50 A2.71 2.71 0 0 1 866.64 368.50 A2.71 2.71 0 0 1 872.07 368.50 A2.71 2.71 0 0 1 877.50 368.50 A2.61 2.61 0 0 1 877.50 373.73 A2.61 2.61 0 0 1 877.50 378.95 A2.61 2.61 0 0 1 877.50 384.18 A2.61 2.61 0 0 1 877.50 389.40 A2.61 2.61 0 0 1 877.50 394.62 A2.61 2.61 0 0 1 877.50 399.85 A2.61 2.61 0 0 1 877.50 405.07 A2.61 2.61 0 0 1 877.50 410.30 A2.61 2.61 0 0 1 877.50 415.52 A2.61 2.61 0 0 1 877.50 420.75 A2.61 2.61 0 0 1 877.50 425.98 A2.61 2.61 0 0 1 877.50 431.20 A2.61 2.61 0 0 1 877.50 436.43 A2.61 2.61 0 0 1 877.50 441.65 A2.61 2.61 0 0 1 877.50 446.88 A2.61 2.61 0 0 1 877.50 452.10 A2.61 2.61 0 0 1 877.50 457.32 A2.61 2.61 0 0 1 877.50 462.55 A2.61 2.61 0 0 1 877.50 467.77 A2.61 2.61 0 0 1 877.50 473.00 A2.71 2.71 0 0 1 872.07 473.00 A2.71 2.71 0 0 1 866.64 473.00 A2.71 2.71 0 0 1 861.21 473.00 A2.71 2.71 0 0 1 855.79 473.00 A2.71 2.71 0 0 1 850.36 473.00 A2.71 2.71 0 0 1 844.93 473.00 A2.71 2.71 0 0 1 839.50 473.00 A2.61 2.61 0 0 1 839.50 467.77 A2.61 2.61 0 0 1 839.50 462.55 A2.61 2.61 0 0 1 839.50 457.32 A2.61 2.61 0 0 1 839.50 452.10 A2.61 2.61 0 0 1 839.50 446.88 A2.61 2.61 0 0 1 839.50 441.65 A2.61 2.61 0 0 1 839.50 436.43 A2.61 2.61 0 0 1 839.50 431.20 A2.61 2.61 0 0 1 839.50 425.98 A2.61 2.61 0 0 1 839.50 420.75 A2.61 2.61 0 0 1 839.50 415.52 A2.61 2.61 0 0 1 839.50 410.30 A2.61 2.61 0 0 1 839.50 405.07 A2.61 2.61 0 0 1 839.50 399.85 A2.61 2.61 0 0 1 839.50 394.62 A2.61 2.61 0 0 1 839.50 389.40 A2.61 2.61 0 0 1 839.50 384.18 A2.61 2.61 0 0 1 839.50 378.95 A2.61 2.61 0 0 1 839.50 373.73 A2.61 2.61 0 0 1 839.50 368.50 Z" stroke="#1f3fd8" stroke-width="0.9" fill="none" />
<path d="M849.5 374.5 H871 V464 H849.5 Z" stroke="#111" stroke-width="2.6" fill="none" />
<path d="M852 376 L868.5 463 M868.5 376 L852 463" stroke="#111" stroke-width="0.9" fill="none" />
<line x1="865" y1="376" x2="865" y2="462" stroke="#111" stroke-width="1" stroke-dasharray="5 2"/>
<text x="858" y="416" font-size="4.6" fill="#333" textLength="13" lengthAdjust="spacingAndGlyphs" text-anchor="middle" transform="rotate(-90 858 416)">VOID</text>
<path d="M871.5 374 V515" stroke="#111" stroke-width="2.6" fill="none" />
<rect x="882" y="346" width="68.5" height="19.5" fill="#c5f6fb" />
<text x="884.8" y="354" font-size="5.4" fill="#134" textLength="57.5" lengthAdjust="spacingAndGlyphs">Verify all ducting will</text>
<text x="884.8" y="361.4" font-size="5.4" fill="#134" textLength="41.5" lengthAdjust="spacingAndGlyphs">fit in this chase</text>
<path d="M882 356 H871.3 V368" stroke="#2f3fd0" stroke-width="1" fill="none" />
<path d="M878.5 390 H907 V429 H878.5 Z M878.5 390 L907 429 M907 390 L878.5 429" stroke="#111" stroke-width="0.9" fill="none" />
<path d="M878.5 431.5 H907 V471.5 H878.5 Z M878.5 431.5 L907 471.5 M907 431.5 L878.5 471.5" stroke="#111" stroke-width="0.9" fill="none" />
<path d="M871.5 475.5 H910" stroke="#111" stroke-width="2" fill="none" />
<path d="M893 478.5 H904.5 V490 H893 Z M893 478.5 L904.5 490 M904.5 478.5 L893 490" stroke="#111" stroke-width="0.9" fill="none" />
<path d="M880 492 H904.5 V512 H880 Z M880 492 L904.5 512 M904.5 492 L880 512" stroke="#111" stroke-width="0.9" fill="none" />
<path d="M871.5 515 H910" stroke="#111" stroke-width="2" fill="none" />
<line x1="875.5" y1="478" x2="875.5" y2="513" stroke="#111" stroke-width="1" stroke-dasharray="3 2"/>
<text x="813" y="508.8" font-size="4.6" fill="#111" textLength="42" lengthAdjust="spacingAndGlyphs" font-weight="bold" text-anchor="middle">WOMEN&#x27;S RR  254</text>
<text x="749.5" y="494" font-size="5.4" fill="#111" textLength="50.5" lengthAdjust="spacingAndGlyphs" font-weight="bold" text-anchor="middle" transform="rotate(-90 749.5 494)">MOTHER&#x27;S RM 252</text>
<path d="M800 465 V492 H785 V497 H770" stroke="#111" stroke-width="1.6" fill="none" />
<path d="M815 465 V480 M830 465 V480" stroke="#111" stroke-width="1" fill="none" />
<circle cx="807.5" cy="473.5" r="2.3" fill="none" stroke="#111" stroke-width="1.2"/>
<rect x="806.5" y="467" width="2" height="3" fill="#111" />
<circle cx="822" cy="473.5" r="2.3" fill="none" stroke="#111" stroke-width="1.2"/>
<rect x="821" y="467" width="2" height="3" fill="#111" />
<circle cx="837" cy="473.5" r="2.3" fill="none" stroke="#111" stroke-width="1.2"/>
<rect x="836" y="467" width="2" height="3" fill="#111" />
<circle cx="862" cy="473.5" r="2.3" fill="none" stroke="#111" stroke-width="1.2"/>
<path d="M806 480 l4 -1.5 M812 489 v-9 h4 M827 489 v-9 h4 M841 484 l3 4" stroke="#111" stroke-width="1.1" fill="none" />
<path d="M846 465 V497 H850 M846 512 H872 M846 512 V520" stroke="#111" stroke-width="1.6" fill="none" />
<path d="M800 515 H846 V529 M800 515 V529" stroke="#111" stroke-width="1.6" fill="none" />
<rect x="808" y="518" width="9" height="5" fill="none" stroke="#111" stroke-width="1.4"/>
<rect x="828" y="518" width="9" height="5" fill="none" stroke="#111" stroke-width="1.4"/>
<line x1="799" y1="459" x2="787" y2="482" stroke="#111" stroke-width="0.8" />
<circle cx="787" cy="482" r="1.2" fill="#111"/>
<rect x="769" y="467" width="8" height="8" fill="none" stroke="#111" stroke-width="0.8"/>
<circle cx="776" cy="498.5" r="4.3" fill="#fff" stroke="#111" stroke-width="0.7"/>
<circle cx="850.5" cy="505.5" r="4.3" fill="#fff" stroke="#111" stroke-width="0.7"/>
<path d="M770 497 A15 15 0 0 1 784 512" stroke="#111" stroke-width="0.8" fill="none" />
<path d="M846 512 A14 14 0 0 0 860 500" stroke="#111" stroke-width="0.8" fill="none" />
<rect x="730" y="495" width="10" height="19" fill="none" stroke="#111" stroke-width="0.8"/>
<rect x="731.5" y="508" width="7" height="5" fill="none" stroke="#111" stroke-width="1.6"/>
<path d="M752 529 A12 12 0 0 1 766 516" stroke="#111" stroke-width="0.8" fill="none" />
<circle cx="858" cy="487.5" r="11" fill="#f26d6d"/>
<line x1="866" y1="487" x2="899" y2="529" stroke="#e03a4a" stroke-width="1" />
<path d="M864 481 l2.5 8 M866 480 l2 9" stroke="#d43a3a" stroke-width="0.8" fill="none" />
<text x="937.5" y="443" font-size="5.4" fill="#111" textLength="32" lengthAdjust="spacingAndGlyphs" font-weight="bold" text-anchor="middle">LOBBY  256</text>
<line x1="915" y1="460" x2="961" y2="460" stroke="#f09a3e" stroke-width="1" />
<path d="M912.5 460 l4.5 -2.5 v5 z M964 460 l-4.5 -2.5 v5 z" stroke="#f09a3e" stroke-width="0.5" fill="#f09a3e" />
<path d="M1159.5 529 V366 Q1159.5 357.5 1151 357.5 H1139 Q1131 357.5 1131 364 V371 H1085 V363 Q1085 360 1082 360.2 L981 367.5 Q965 369 965 384 V515 Q965 529 978 529" stroke="#111" stroke-width="1.5" fill="none" />
<path d="M1156.5 529 V368 Q1156.5 360.5 1150 360.5 H1140 Q1134 360.5 1134 366 V373.5" stroke="#111" stroke-width="0.8" fill="none" />
<line x1="1131" y1="357.8" x2="1085" y2="361" stroke="#111" stroke-width="0.8" stroke-dasharray="1.2 1.2"/>
<path d="M1004 374 H1148" stroke="#111" stroke-width="2.4" fill="none" />
<path d="M1004 374 H1148" stroke="#bbb" stroke-width="0.7" fill="none" stroke-dasharray="1 1"/>
<path d="M1004 374 V515" stroke="#111" stroke-width="2.6" fill="none" />
<path d="M970 390 H997.5 V430 H970 Z M970 390 L997.5 430 M997.5 390 L970 430" stroke="#111" stroke-width="0.9" fill="none" />
<path d="M970 432 H997.5 V474 H970 Z M970 432 L997.5 474 M997.5 432 L970 474" stroke="#111" stroke-width="0.9" fill="none" />
<path d="M965 477.5 H1004" stroke="#111" stroke-width="1.6" fill="none" />
<path d="M972 492 H995 V514 H972 Z M972 492 L995 514 M995 492 L972 514" stroke="#111" stroke-width="0.9" fill="none" />
<text x="1042.5" y="384" font-size="5.4" fill="#111" textLength="35" lengthAdjust="spacingAndGlyphs" font-weight="bold" text-anchor="middle">SERVER  257</text>
<rect x="1014.5" y="392.5" width="22" height="53.5" fill="none" stroke="#111" stroke-width="1" stroke-dasharray="2 1.5"/>
<path d="M1021.5 392.5 V446 M1029.5 392.5 V446 M1014.5 410 h22 M1014.5 428 h22" stroke="#111" stroke-width="0.9" fill="none" />
<rect x="1042.5" y="392.5" width="22" height="53.5" fill="none" stroke="#111" stroke-width="1" stroke-dasharray="2 1.5"/>
<path d="M1049.5 392.5 V446 M1057.5 392.5 V446 M1042.5 410 h22 M1042.5 428 h22" stroke="#111" stroke-width="0.9" fill="none" />
<rect x="1071" y="392.5" width="22" height="53.5" fill="none" stroke="#111" stroke-width="1" stroke-dasharray="2 1.5"/>
<path d="M1078 392.5 V446 M1086 392.5 V446 M1071 410 h22 M1071 428 h22" stroke="#111" stroke-width="0.9" fill="none" />
<text x="1061" y="459" font-size="5.4" fill="#111" textLength="43.5" lengthAdjust="spacingAndGlyphs" font-weight="bold" text-anchor="middle">STORAGE 258A</text>
<path d="M1004 465 H1108" stroke="#111" stroke-width="2.6" fill="none" />
<text x="1062.5" y="508.5" font-size="5" fill="#111" textLength="40" lengthAdjust="spacingAndGlyphs" font-weight="bold" text-anchor="middle">MEN&#x27;S RR  258</text>
<path d="M1031 465 V492 H1022 V505 H1008" stroke="#111" stroke-width="1.6" fill="none" />
<path d="M1076 465 V492 H1085 V505 H1100" stroke="#111" stroke-width="1.6" fill="none" />
<rect x="1046" y="469" width="28" height="18" fill="none" stroke="#111" stroke-width="1" stroke-dasharray="2.5 1.5"/>
<path d="M1058 475 v5 M1061 475 v5" stroke="#111" stroke-width="1" fill="none" />
<circle cx="1013" cy="472.5" r="2.3" fill="none" stroke="#111" stroke-width="1.2"/>
<circle cx="1038" cy="472.5" r="2.3" fill="none" stroke="#111" stroke-width="1.2"/>
<circle cx="1053" cy="472.5" r="2.3" fill="none" stroke="#111" stroke-width="1.2"/>
<circle cx="1068" cy="472.5" r="2.3" fill="none" stroke="#111" stroke-width="1.2"/>
<line x1="1080" y1="468" x2="1090" y2="481" stroke="#111" stroke-width="0.8" />
<circle cx="1090" cy="481" r="1.2" fill="#111"/>
<path d="M1032 517 H1100 V529 M1032 517 V529" stroke="#111" stroke-width="1.6" fill="none" />
<rect x="1036" y="519.5" width="9" height="5" fill="none" stroke="#111" stroke-width="1.4"/>
<rect x="1056" y="519.5" width="9" height="5" fill="none" stroke="#111" stroke-width="1.4"/>
<circle cx="1023" cy="505.5" r="4.3" fill="#fff" stroke="#111" stroke-width="0.7"/>
<circle cx="1098" cy="497.5" r="4.3" fill="#fff" stroke="#111" stroke-width="0.7"/>
<circle cx="1098" cy="374" r="4.3" fill="#fff" stroke="#111" stroke-width="0.7"/>
<circle cx="1117" cy="374" r="4.3" fill="#fff" stroke="#111" stroke-width="0.7"/>
<path d="M1108.5 374 V529 M1148 374 V529" stroke="#111" stroke-width="2.4" fill="none" />
<path d="M1108.5 374 V392" stroke="#111" stroke-width="3.4" fill="none" />
<text x="1129.5" y="408" font-size="5.4" fill="#111" textLength="40" lengthAdjust="spacingAndGlyphs" font-weight="bold" text-anchor="middle" transform="rotate(-90 1129.5 408)">STORAGE  260</text>
<path d="M1110 437.5 H1148 V490 H1110 Z" stroke="#111" stroke-width="2.6" fill="none" />
<line x1="1112" y1="442.0" x2="1128" y2="442.0" stroke="#111" stroke-width="1.6" stroke-dasharray="1.3 1.3"/>
<line x1="1112" y1="445.9" x2="1128" y2="445.9" stroke="#111" stroke-width="1.6" stroke-dasharray="1.3 1.3"/>
<line x1="1112" y1="449.8" x2="1128" y2="449.8" stroke="#111" stroke-width="1.6" stroke-dasharray="1.3 1.3"/>
<line x1="1112" y1="453.7" x2="1128" y2="453.7" stroke="#111" stroke-width="1.6" stroke-dasharray="1.3 1.3"/>
<line x1="1112" y1="457.6" x2="1128" y2="457.6" stroke="#111" stroke-width="1.6" stroke-dasharray="1.3 1.3"/>
<line x1="1112" y1="461.5" x2="1128" y2="461.5" stroke="#111" stroke-width="1.6" stroke-dasharray="1.3 1.3"/>
<line x1="1133" y1="461.5" x2="1146" y2="461.5" stroke="#111" stroke-width="0.9" />
<line x1="1112" y1="465.4" x2="1128" y2="465.4" stroke="#111" stroke-width="1.6" stroke-dasharray="1.3 1.3"/>
<line x1="1133" y1="465.4" x2="1146" y2="465.4" stroke="#111" stroke-width="0.9" />
<line x1="1112" y1="469.3" x2="1128" y2="469.3" stroke="#111" stroke-width="1.6" stroke-dasharray="1.3 1.3"/>
<line x1="1133" y1="469.3" x2="1146" y2="469.3" stroke="#111" stroke-width="0.9" />
<line x1="1112" y1="473.2" x2="1128" y2="473.2" stroke="#111" stroke-width="1.6" stroke-dasharray="1.3 1.3"/>
<line x1="1133" y1="473.2" x2="1146" y2="473.2" stroke="#111" stroke-width="0.9" />
<line x1="1112" y1="477.1" x2="1128" y2="477.1" stroke="#111" stroke-width="1.6" stroke-dasharray="1.3 1.3"/>
<line x1="1133" y1="477.1" x2="1146" y2="477.1" stroke="#111" stroke-width="0.9" />
<line x1="1112" y1="481.0" x2="1128" y2="481.0" stroke="#111" stroke-width="1.6" stroke-dasharray="1.3 1.3"/>
<line x1="1133" y1="481.0" x2="1146" y2="481.0" stroke="#111" stroke-width="0.9" />
<line x1="1112" y1="484.9" x2="1128" y2="484.9" stroke="#111" stroke-width="1.6" stroke-dasharray="1.3 1.3"/>
<line x1="1133" y1="484.9" x2="1146" y2="484.9" stroke="#111" stroke-width="0.9" />
<path d="M1129 441 V488 M1133 441 V488" stroke="#111" stroke-width="1.2" fill="none" />
<text x="1129" y="509.5" font-size="5.4" fill="#111" textLength="28" lengthAdjust="spacingAndGlyphs" font-weight="bold" text-anchor="middle">STAIR  259</text>
<path d="M1112 529 V512 M1112 514 A13 13 0 0 1 1125 527" stroke="#c33" stroke-width="0.8" fill="none" /></g>
<g id="docscroll"><rect x="1833.3" y="137" width="25.7" height="392" fill="#f0f0f0" />
<rect x="1835" y="237" width="22.5" height="113.5" fill="#cdcdcd" />
<path d="M1840.5 154.5 l5.5 -5.5 l5.5 5.5" stroke="#505050" stroke-width="2.2" fill="none" />
<path d="M1840.5 513 l5.5 5.5 l5.5 -5.5" stroke="#505050" stroke-width="2.2" fill="none" /></g>
<g id="navbar"><rect x="53.3" y="529" width="1806" height="51.5" fill="#2e2e2e" />
<rect x="53.3" y="580.3" width="1806" height="1.4" fill="#1c1c1c" />
<path d="M66 543 h25 v24 h-25 z M66 546 h25" stroke="#5a5a5a" stroke-width="1.3" fill="none" />
<path d="M118 543 h25 v24 h-25 z M118 546 h25 M130.5 546 v21" stroke="#fff" stroke-width="1.5" fill="none" />
<path d="M170 543 h25 v24 h-25 z M170 546 h25 M170 556 h25 M170 558.5 h25" stroke="#fff" stroke-width="1.5" fill="none" />
<line x1="212.5" y1="541" x2="212.5" y2="569" stroke="#5c5c5c" stroke-width="1.2" />
<path d="M231 542.5 h14 l6.5 6.5 v19.5 h-20.5 z M245 542.5 v6.5 h6.5" stroke="#fff" stroke-width="1.5" fill="none" />
<path d="M241 551.5 v13 M234.5 558 h13 M239 553.5 l2 -2.5 l2 2.5 M239 562.5 l2 2.5 l2 -2.5 M236.5 556 l-2.5 2 l2.5 2 M245.5 556 l2.5 2 l-2.5 2" stroke="#fff" stroke-width="1.2" fill="none" />
<path d="M283 541.5 v4.5 h20.5 v-4.5 M283.5 568 v-16.5 h13 l7 7 v9.5 M296.5 551.5 v7 h7 M283 560 v9 M304 560 v9 M285 564.5 h17 M287.5 562 l-3 2.5 l3 2.5 M299.5 562 l3 2.5 l-3 2.5" stroke="#fff" stroke-width="1.4" fill="none" />
<rect x="438" y="529.5" width="52" height="51" fill="#1b5a8e" />
<path d="M457.5 557 L457.8 548 Q457.8 545.8 459.7 545.8 Q461.5 545.8 461.5 548 L462 554 M462 554 L462.7 544.2 Q462.9 542 464.7 542 Q466.5 542 466.6 544.2 L466.8 554 M466.8 554 L468 547.3 Q468.4 545 470.2 545.3 Q472 545.7 471.7 548 L470.8 555.5 M470.8 555.5 L473 552 Q474 550 475.5 550.8 Q477 551.7 476.2 553.8 L473 561.5 Q471.5 567.8 466 567.8 L463 567.8 Q459.5 567.8 457 564 L452.8 557.5 Q451.6 555.3 453.3 554.3 Q455 553.4 456.3 555.2 L457.5 557" stroke="#eaf8ff" stroke-width="1.6" fill="none" stroke-linejoin="round" stroke-linecap="round"/>
<path d="M509.2 543.7 V565 L512.5 562.2 L515.2 567.2 L519 565.5 L516.9 560.6 L523.4 559.5 Z" stroke="#fff" stroke-width="1.5" fill="none" stroke-linejoin="round"/>
<path d="M556.2 542.6 h10.4 M556.2 567.7 h10.4 M561.2 542.6 v25" stroke="#fff" stroke-width="1.5" fill="none" />
<text x="566" y="560" font-size="16.5" fill="#fff" textLength="10.4" lengthAdjust="spacingAndGlyphs">A</text>
<circle cx="616.3" cy="551.3" r="9.6" fill="none" stroke="#fff" stroke-width="1.6"/>
<line x1="623.5" y1="558.5" x2="633.3" y2="568.3" stroke="#fff" stroke-width="1.8" />
<path d="M613.4 550 h5.8 M616.3 547 v6 M613.4 555 h5.8" stroke="#fff" stroke-width="1.6" fill="none" />
<path d="M665 548.5 v14 M677.5 548.5 v14 l-9 -7 z" stroke="#5a5a5a" stroke-width="1.4" fill="none" />
<path d="M728.5 548.5 v14 l-10 -7 z" stroke="#5a5a5a" stroke-width="1.4" fill="none" />
<rect x="751.5" y="542.5" width="367" height="26.5" fill="none" rx="3" stroke="#8c8c8c" stroke-width="1.5"/>
<text x="865.5" y="561" font-size="18.5" fill="#fff" textLength="138.5" lengthAdjust="spacingAndGlyphs">Floor Plan (1 of 1)</text>
<path d="M1142.5 548.5 v14 l10 -7 z" stroke="#5a5a5a" stroke-width="1.4" fill="none" />
<path d="M1205.5 548.5 v14 M1193 548.5 v14 l9 -7 z" stroke="#5a5a5a" stroke-width="1.4" fill="none" />
<line x1="1227.5" y1="541" x2="1227.5" y2="569" stroke="#5c5c5c" stroke-width="1.2" />
<circle cx="1256" cy="555.5" r="13" fill="none" stroke="#fff" stroke-width="1.6"/>
<path d="M1260.5 549 v13 l-10 -6.5 z" stroke="#fff" stroke-width="1.5" fill="none" />
<circle cx="1308" cy="555.5" r="13" fill="none" stroke="#5a5a5a" stroke-width="1.4"/>
<path d="M1304 549.5 v12 l9 -6 z" stroke="#5a5a5a" stroke-width="1.3" fill="none" />
<text x="1546.5" y="561" font-size="18.5" fill="#fff" textLength="138.5" lengthAdjust="spacingAndGlyphs">42.00 x 30.00 in</text>
<text x="1714" y="561" font-size="18.5" fill="#fff" textLength="128" lengthAdjust="spacingAndGlyphs">3.75 in = 30&#x27;-0&quot;</text></g>
<g id="markups"><rect x="53.3" y="581.7" width="1806" height="424" fill="#2e2e2e" />
<rect x="105" y="581.7" width="1.3" height="424" fill="#1c1c1c" />
<path d="M77 602.3 l-6.3 5.8 l6.3 5.8 M87 602.3 l-6.3 5.8 l6.3 5.8" stroke="#fff" stroke-width="2" fill="none" />
<path d="M66 660.5 l9.5 -8 h16.5 v16 h-16.5 z" stroke="#fff" stroke-width="1.7" fill="none" stroke-linejoin="round"/>
<rect x="53.3" y="686" width="52" height="52" fill="#1b5a8e" />
<rect x="67.2" y="702.8" width="3.1" height="3" fill="#fff" />
<rect x="74.9" y="702.8" width="16.2" height="2.9" fill="#fff" />
<rect x="67.2" y="710.7" width="3.1" height="3" fill="#fff" />
<rect x="74.9" y="710.7" width="16.2" height="2.9" fill="#fff" />
<rect x="67.2" y="718.1" width="3.1" height="3" fill="#fff" />
<rect x="74.9" y="718.1" width="16.2" height="2.9" fill="#fff" />
<text x="122.5" y="615" font-size="22" fill="#fff" textLength="126.5" lengthAdjust="spacingAndGlyphs" font-weight="bold">Markups List</text>
<path d="M259.5 605 l6.25 6.5 l6.25 -6.5" stroke="#fff" stroke-width="1.8" fill="none" />
<path d="M289 609.5 q12 -12 24 -2.5 M291 611 q10 10 24 -2.5 M313 597 l-22 22" stroke="#fff" stroke-width="1.5" fill="none" />
<circle cx="302.5" cy="608" r="4" fill="none" stroke="#fff" stroke-width="1.4"/>
<rect x="330" y="592.5" width="475" height="31.5" fill="none" rx="3" stroke="#8c8c8c" stroke-width="1.5"/>
<circle cx="345" cy="606" r="7.5" fill="none" stroke="#fff" stroke-width="1.5"/>
<line x1="350.5" y1="611.5" x2="357.5" y2="618.5" stroke="#fff" stroke-width="1.6" />
<text x="381" y="612.5" font-size="17" fill="#fff" textLength="57" lengthAdjust="spacingAndGlyphs" font-weight="bold">Search</text>
<path d="M786.5 603.5 l8 9 M794.5 603.5 l-8 9" stroke="#fff" stroke-width="1.2" fill="none" />
<rect x="837" y="582.5" width="156" height="51" fill="#d27a0b" />
<rect x="993" y="582.5" width="53" height="51" fill="#c9770f" />
<path d="M848.5 598 h19 l-7 9 v8 l-5 3 v-11 z" stroke="#fff" stroke-width="1.6" fill="none" stroke-linejoin="round"/>
<text x="878" y="615" font-size="22" fill="#fff" textLength="92" lengthAdjust="spacingAndGlyphs" font-weight="bold">Filter List</text>
<line x1="1007" y1="600" x2="1031" y2="600" stroke="#fff" stroke-width="1.5" />
<circle cx="1012" cy="600" r="2.6" fill="#c9770f" stroke="#fff" stroke-width="1.3"/>
<line x1="1007" y1="609" x2="1031" y2="609" stroke="#fff" stroke-width="1.5" />
<circle cx="1025" cy="609" r="2.6" fill="#c9770f" stroke="#fff" stroke-width="1.3"/>
<line x1="1007" y1="618" x2="1031" y2="618" stroke="#fff" stroke-width="1.5" />
<circle cx="1013" cy="618" r="2.6" fill="#c9770f" stroke="#fff" stroke-width="1.3"/>
<path d="M1825 602.5 l6.3 5.8 l-6.3 5.8 M1835 602.5 l6.3 5.8 l-6.3 5.8" stroke="#fff" stroke-width="2" fill="none" />
<rect x="106.3" y="634" width="1727" height="3.3" fill="#f47b20" />
<rect x="106.3" y="637.3" width="1727" height="48.7" fill="#dddcd4" />
<rect x="405.5" y="637.3" width="1.2" height="48.7" fill="#a0a0a0" />
<rect x="585.5" y="637.3" width="1.2" height="48.7" fill="#a0a0a0" />
<rect x="999.5" y="637.3" width="1.2" height="48.7" fill="#a0a0a0" />
<text x="120" y="667.5" font-size="18" fill="#a3a3a3" textLength="21" lengthAdjust="spacingAndGlyphs" font-weight="bold">All</text>
<text x="421" y="667.5" font-size="18" fill="#a3a3a3" textLength="21" lengthAdjust="spacingAndGlyphs" font-weight="bold">All</text>
<text x="600" y="667.5" font-size="18" fill="#a3a3a3" textLength="21" lengthAdjust="spacingAndGlyphs" font-weight="bold">All</text>
<text x="1014" y="667.5" font-size="18" fill="#a3a3a3" textLength="21" lengthAdjust="spacingAndGlyphs" font-weight="bold">All</text>
<rect x="106.3" y="686" width="1727" height="52" fill="#404040" />
<rect x="106.3" y="735" width="300" height="3" fill="#1f7fd0" />
<rect x="114.5" y="704.5" width="16.5" height="16.5" fill="none" stroke="#c8c8c8" stroke-width="1.2"/>
<line x1="118.5" y1="712.7" x2="127" y2="712.7" stroke="#d0d0d0" stroke-width="1.2" />
<text x="152" y="719.7" font-size="18" fill="#fff" textLength="61" lengthAdjust="spacingAndGlyphs" font-weight="bold">Subject</text>
<path d="M376.5 716 l6.2 -6.2 l6.2 6.2" stroke="#fff" stroke-width="1.8" fill="none" />
<text x="420.5" y="719.7" font-size="18" fill="#fff" textLength="90" lengthAdjust="spacingAndGlyphs" font-weight="bold">Page Label</text>
<text x="600" y="719.7" font-size="18" fill="#fff" textLength="89" lengthAdjust="spacingAndGlyphs" font-weight="bold">Comments</text>
<text x="1014" y="719.7" font-size="18" fill="#fff" textLength="54" lengthAdjust="spacingAndGlyphs" font-weight="bold">Author</text>
<text x="1484" y="719.7" font-size="18" fill="#fff" textLength="50.5" lengthAdjust="spacingAndGlyphs" font-weight="bold">Space</text>
<rect x="405.5" y="686" width="1.3" height="293" fill="#8a8a8a" />
<rect x="585.5" y="686" width="1.3" height="293" fill="#8a8a8a" />
<rect x="999.5" y="686" width="1.3" height="293" fill="#8a8a8a" />
<rect x="1206.5" y="686" width="1.3" height="293" fill="#8a8a8a" />
<rect x="1470.5" y="686" width="1.3" height="293" fill="#8a8a8a" />
<path d="M122.5 747 l6.5 7 l6.5 -7" stroke="#fff" stroke-width="2.1" fill="none" />
<text x="152" y="758" font-size="18" fill="#fff" textLength="100" lengthAdjust="spacingAndGlyphs" font-weight="bold">Architect (4)</text>
<text x="206.5" y="781" font-size="18" fill="#fff" textLength="71" lengthAdjust="spacingAndGlyphs">Architect</text>
<text x="410" y="781" font-size="18" fill="#fff" textLength="78.5" lengthAdjust="spacingAndGlyphs">Floor Plan</text>
<text x="590" y="783" font-size="18" fill="#fff" textLength="338" lengthAdjust="spacingAndGlyphs">Stair doors to be fire rated assemblies, typ.</text>
<text x="1004" y="781" font-size="18" fill="#fff" textLength="59" lengthAdjust="spacingAndGlyphs">JPopiel</text>
<text x="1211" y="781" font-size="18" fill="#fff" textLength="166" lengthAdjust="spacingAndGlyphs">3/7/2018 2:19:32 PM</text>
<text x="206.5" y="813" font-size="18" fill="#fff" textLength="71" lengthAdjust="spacingAndGlyphs">Architect</text>
<text x="410" y="813" font-size="18" fill="#fff" textLength="78.5" lengthAdjust="spacingAndGlyphs">Floor Plan</text>
<text x="1004" y="813" font-size="18" fill="#fff" textLength="59" lengthAdjust="spacingAndGlyphs">JPopiel</text>
<text x="1211" y="813" font-size="18" fill="#fff" textLength="166" lengthAdjust="spacingAndGlyphs">3/7/2018 2:19:32 PM</text>
<text x="206.5" y="845" font-size="18" fill="#fff" textLength="71" lengthAdjust="spacingAndGlyphs">Architect</text>
<text x="410" y="845" font-size="18" fill="#fff" textLength="78.5" lengthAdjust="spacingAndGlyphs">Floor Plan</text>
<text x="590" y="847" font-size="18" fill="#fff" textLength="229.5" lengthAdjust="spacingAndGlyphs">Verify 60in clr. radius for ADA</text>
<text x="1004" y="845" font-size="18" fill="#fff" textLength="59" lengthAdjust="spacingAndGlyphs">JPopiel</text>
<text x="1211" y="845" font-size="18" fill="#fff" textLength="166" lengthAdjust="spacingAndGlyphs">3/7/2018 2:19:32 PM</text>
<text x="206.5" y="877" font-size="18" fill="#fff" textLength="71" lengthAdjust="spacingAndGlyphs">Architect</text>
<text x="410" y="877" font-size="18" fill="#fff" textLength="78.5" lengthAdjust="spacingAndGlyphs">Floor Plan</text>
<text x="590" y="879" font-size="18" fill="#fff" textLength="157" lengthAdjust="spacingAndGlyphs">Emergency Egress?</text>
<text x="1004" y="877" font-size="18" fill="#fff" textLength="59" lengthAdjust="spacingAndGlyphs">JPopiel</text>
<text x="1211" y="877" font-size="18" fill="#fff" textLength="166" lengthAdjust="spacingAndGlyphs">3/7/2018 2:19:32 PM</text>
<text x="206.5" y="934" font-size="18" fill="#fff" textLength="55" lengthAdjust="spacingAndGlyphs">Callout</text>
<text x="410" y="934" font-size="18" fill="#fff" textLength="78.5" lengthAdjust="spacingAndGlyphs">Floor Plan</text>
<text x="590" y="936" font-size="18" fill="#fff" textLength="170" lengthAdjust="spacingAndGlyphs">Provide mullion detail</text>
<text x="1004" y="934" font-size="18" fill="#fff" textLength="62" lengthAdjust="spacingAndGlyphs">aavalos</text>
<text x="1211" y="934" font-size="18" fill="#fff" textLength="176" lengthAdjust="spacingAndGlyphs">7/16/2020 6:34:04 PM</text>
<path d="M174 767.5 h19 v11 h-19 z M193 778.5 l6 5.5 l-3 3" stroke="#fff" stroke-width="1.5" fill="none" />
<path d="M174 788.5 q0 -3.2 3.2 -3.2 q3.2 0 3.2 3.2 q0 -3.2 3.2 -3.2 q3.2 0 3.2 3.2 q0 -3.2 3.2 -3.2 q3.2 0 3.2 3.2 q0 -3.2 3.2 -3.2 q3.2 0 3.2 3.2" stroke="#fff" stroke-width="1.4" fill="none" />
<ellipse cx="187" cy="810.5" rx="13" ry="10" fill="none" stroke="#fff" stroke-width="1.6"/>
<path d="M174 831.5 h19 v11.5 h-19 z" stroke="#fff" stroke-width="1.5" fill="none" />
<path d="M193 843.0 l5.5 5.5 l-6 6" stroke="#fff" stroke-width="1.4" fill="none" />
<path d="M187 858.5 l3.5 -7 l3.5 3.5 z" stroke="#fff" stroke-width="1" fill="#fff" />
<path d="M176 861.5 h26 M176 861.5 v27 " stroke="#7a55a8" stroke-width="2.4" fill="none" />
<path d="M180 861.5 v3.5 M184.5 861.5 v3.5 M189 861.5 v3.5 M193.5 861.5 v3.5 M198 861.5 v3.5 M176 866 h3.5 M176 870.5 h3.5 M176 875 h3.5 M176 879.5 h3.5 M176 884 h3.5" stroke="#7a55a8" stroke-width="1.4" fill="none" />
<path d="M182 888.5 v-11 l8 -8.5 h10.5 v19.5 z" stroke="#fff" stroke-width="1.5" fill="none" />
<rect x="179.8" y="886.3" width="4.4" height="4.4" fill="#fff" />
<rect x="179.8" y="875.3" width="4.4" height="4.4" fill="#fff" />
<rect x="187.8" y="866.8" width="4.4" height="4.4" fill="#fff" />
<rect x="198.3" y="866.8" width="4.4" height="4.4" fill="#fff" />
<rect x="198.3" y="886.3" width="4.4" height="4.4" fill="#fff" />
<rect x="106.3" y="891.3" width="1727" height="1.8" fill="#8a8a8a" />
<path d="M122.5 899.8 l6.5 7 l6.5 -7" stroke="#fff" stroke-width="2.1" fill="none" />
<text x="152" y="910.8" font-size="18" fill="#fff" textLength="84" lengthAdjust="spacingAndGlyphs" font-weight="bold">Callout (1)</text>
<path d="M174 920.5 h19 v11.5 h-19 z" stroke="#fff" stroke-width="1.5" fill="none" />
<path d="M193 932.0 l5.5 5.5 l-6 6" stroke="#fff" stroke-width="1.4" fill="none" />
<path d="M187 947.5 l3.5 -7 l3.5 3.5 z" stroke="#fff" stroke-width="1" fill="#fff" />
<rect x="106.3" y="947.5" width="1727" height="1.8" fill="#8a8a8a" />
<path d="M122.5 956.8 l6.5 7 l6.5 -7" stroke="#fff" stroke-width="2.1" fill="none" />
<text x="152" y="967.8" font-size="18" fill="#fff" textLength="113" lengthAdjust="spacingAndGlyphs" font-weight="bold">Contractor (6)</text>
<g clip-path="url(#rowclip)"><path d="M174 977.5 h19 v6 h-19 z" stroke="#fff" stroke-width="1.5" fill="none" />
<text x="206.5" y="991" font-size="18" fill="#fff" textLength="85" lengthAdjust="spacingAndGlyphs">Contractor</text>
<text x="410" y="991" font-size="18" fill="#fff" textLength="78.5" lengthAdjust="spacingAndGlyphs">Floor Plan</text>
<text x="1004" y="991" font-size="18" fill="#fff" textLength="46" lengthAdjust="spacingAndGlyphs">FCole</text>
<text x="1211" y="991" font-size="18" fill="#fff" textLength="166" lengthAdjust="spacingAndGlyphs">3/7/2018 2:18:41 PM</text></g>
<rect x="1833.3" y="634" width="25.7" height="345.3" fill="#f0f0f0" />
<rect x="1835" y="660" width="22.5" height="52" fill="#cdcdcd" />
<path d="M1840.5 652 l5.5 -5.5 l5.5 5.5" stroke="#505050" stroke-width="2.2" fill="none" />
<path d="M1840.5 963 l5.5 5.5 l5.5 -5.5" stroke="#505050" stroke-width="2.2" fill="none" />
<rect x="106.3" y="979" width="1752.7" height="25.7" fill="#f0f0f0" />
<rect x="132" y="980.5" width="1401" height="23" fill="#cdcdcd" />
<path d="M122 987 l-5.5 5.5 l5.5 5.5" stroke="#505050" stroke-width="2.2" fill="none" />
<path d="M1816 987 l5.5 5.5 l-5.5 5.5" stroke="#505050" stroke-width="2.2" fill="none" /></g>
<g id="filterpopup"><rect x="1048" y="586" width="474" height="173" fill="#000" opacity="0.28" filter="url(#blur)"/>
<rect x="1046" y="583.5" width="471" height="171.5" fill="#2f2f2f" stroke="#e9a03c" stroke-width="2.2"/>
<text x="1071" y="616" font-size="17" fill="#7d2a2a" textLength="67" lengthAdjust="spacingAndGlyphs" font-weight="bold" font-style="italic">Clear All</text>
<path d="M1484 603 l16 16 M1500 603 l-16 16" stroke="#6a2626" stroke-width="1.5" fill="none" />
<rect x="1047.2" y="636.8" width="468.6" height="1.4" fill="#b5382f" />
<text x="1062.5" y="678" font-size="17" fill="#6c6c6c" textLength="83.5" lengthAdjust="spacingAndGlyphs" font-weight="bold" font-style="italic">Save Filter</text>
<rect x="1063" y="691.5" width="298" height="46" fill="none" rx="4" stroke="#4b4b4b" stroke-width="1.3"/>
<text x="1076" y="721" font-size="18" fill="#454545" textLength="141.5" lengthAdjust="spacingAndGlyphs" font-style="italic">Saved Filter Name</text>
<rect x="1367.5" y="691.5" width="64.5" height="46" fill="none" rx="4" stroke="#4b4b4b" stroke-width="1.3"/>
<path d="M1392 714.5 l5 5 l10 -10.5" stroke="#505050" stroke-width="1.4" fill="none" />
<rect x="1437.5" y="691.5" width="62.5" height="46" fill="none" rx="4" stroke="#4b4b4b" stroke-width="1.3"/>
<path d="M1462.5 709 l11 11 M1473.5 709 l-11 11" stroke="#505050" stroke-width="1.3" fill="none" /></g>
<g id="rightbar"><rect x="1859" y="85.5" width="62" height="920" fill="#2e2e2e" />
<line x1="1863" y1="92" x2="1914" y2="92" stroke="#9a9a9a" stroke-width="1.6" stroke-dasharray="1.6 1.9"/>
<rect x="1876" y="110.5" width="26.5" height="26" fill="none" stroke="#fff" stroke-width="1.6"/>
<text x="1883.3" y="130" font-size="17.5" fill="#fff" textLength="11.5" lengthAdjust="spacingAndGlyphs">A</text>
<path d="M1894 162 L1885 169.5 M1887.5 167.5 L1902 181 M1884.5 178 L1894.5 186 L1897 182.5 L1899.5 184.5 L1902.5 180.5 M1887.5 167.5 L1884.5 178" stroke="#d8b12c" stroke-width="1.7" fill="none" stroke-linejoin="round"/>
<path d="M1884.5 178 L1876.5 187.5 H1890 L1893 184.8" stroke="#fff" stroke-width="1.6" fill="none" stroke-linejoin="round"/>
<path d="M1894 214.2 L1882.7 229.2 L1889.3 234.9 L1901.5 224.5 M1885.5 225.5 L1892.5 232 M1882.7 229.2 L1879.8 236.5 L1889.3 234.9" stroke="#1f7fd0" stroke-width="1.7" fill="none" stroke-linejoin="round"/>
<path d="M1879.6 235.5 l-2.2 3.6 l2 1.5 l3.6 -2.4 z" stroke="#fff" stroke-width="1" fill="#fff" />
<path d="M1876 266 h20.5 v11.5 h-20.5 z M1896.5 277.5 l6 6 l-4 4" stroke="#fff" stroke-width="1.5" fill="none" />
<path d="M1876 291.5 q0 -3.4 3.4 -3.4 q3.4 0 3.4 3.4 q0 -3.4 3.4 -3.4 q3.4 0 3.4 3.4 q0 -3.4 3.4 -3.4 q3.4 0 3.4 3.4 q0 -3.4 3.4 -3.4 q3.4 0 3.4 3.4" stroke="#fff" stroke-width="1.4" fill="none" />
<path d="M1886.1 323.4 A3.7 3.7 0 1 1 1892.5 323.4 A3.7 3.7 0 1 1 1897.0 327.9 A3.7 3.7 0 1 1 1897.0 334.3 A3.7 3.7 0 1 1 1892.5 338.8 A3.7 3.7 0 1 1 1886.1 338.8 A3.7 3.7 0 1 1 1881.6 334.3 A3.7 3.7 0 1 1 1881.6 327.9 A3.7 3.7 0 1 1 1886.1 323.4 Z" stroke="#fff" stroke-width="1.5" fill="none" />
<path d="M1876 370 h20.5 v11.5 h-20.5 z M1896.5 381.5 l5.5 5.5 l-6 6" stroke="#fff" stroke-width="1.5" fill="none" />
<path d="M1890 397 l3.5 -7.5 l4 4 z" stroke="#fff" stroke-width="1" fill="#fff" />
<path d="M1884.5 440 q1.5 -5 -0.5 -9 q-1.5 -3.5 0.5 -6.5 q2 -2.5 4.5 -2.5 q2.5 0 4.5 2.5 q2 3 0.5 6.5 q-2 4 -0.5 9 M1872 444.5 v-4.5 h26 v4.5 z M1871 448.5 h27.5" stroke="#fff" stroke-width="1.6" fill="none" stroke-linejoin="round"/>
<path d="M1902.5 432.5 l6.0 6.5 l6.0 -6.5" stroke="#fff" stroke-width="1.8" fill="none" />
<rect x="1876" y="475.5" width="26.5" height="23.5" fill="none" stroke="#fff" stroke-width="1.6"/>
<path d="M1876 494 l7.5 -6.5 l4 3.5 l8 -8 l7 7" stroke="#fff" stroke-width="1.5" fill="none" />
<circle cx="1885" cy="481.5" r="2" fill="#fff"/>
<path d="M1880.5 524 v14 M1873.5 531 h14" stroke="#fff" stroke-width="1.5" fill="none" />
<rect x="1880.5" y="531" width="23" height="22.5" fill="none" stroke="#fff" stroke-width="1.5" stroke-dasharray="3.3 2.4"/>
<line x1="1863" y1="571" x2="1906" y2="571" stroke="#9a9a9a" stroke-width="1.6" stroke-dasharray="1.6 1.9"/>
<line x1="1871" y1="615" x2="1897" y2="589.5" stroke="#fff" stroke-width="1.8" />
<line x1="1871" y1="667" x2="1890" y2="648" stroke="#fff" stroke-width="1.8" />
<path d="M1897 641.5 l-4 10.5 l-6.5 -6.5 z" stroke="#fff" stroke-width="1" fill="#fff" />
<path d="M1871.5 719 q1 -22 25.5 -25.5" stroke="#fff" stroke-width="1.8" fill="none" />
<path d="M1871.5 771.5 l4 -12.5 l9 4.5 l-1.5 -12 l9.5 4 l4.5 -10.5" stroke="#fff" stroke-width="1.8" fill="none" />
<path d="M1871 810.5 h27 M1873 805 v11 M1896 805 v11 M1870.5 813 l5 -5 M1893.5 813 l5 -5" stroke="#fff" stroke-width="1.4" fill="none" />
<rect x="1871.5" y="853" width="26" height="19" fill="none" stroke="#fff" stroke-width="1.6"/>
<ellipse cx="1884.5" cy="914.5" rx="13" ry="9.7" fill="none" stroke="#fff" stroke-width="1.6"/>
<rect x="1859.5" y="989" width="50.5" height="16" fill="#353535" />
<path d="M1879.5 994.5 l6.25 6.5 l6.25 -6.5" stroke="#fff" stroke-width="1.8" fill="none" /></g>
<g id="statusbar"><rect x="0" y="1005" width="1921" height="1.5" fill="#1c1c1c" />
<rect x="0" y="1006.5" width="1921" height="51" fill="#2e2e2e" />
<rect x="0" y="1057.3" width="1921" height="3" fill="#000" />
<text x="1" y="1037" font-size="18" fill="#fff" textLength="49" lengthAdjust="spacingAndGlyphs">Ready</text>
<text x="1465" y="1037" font-size="18" fill="#fff" textLength="114" lengthAdjust="spacingAndGlyphs">3.75 in = 30&#x27;-0&quot;</text>
<text x="1613.5" y="1037" font-size="18" fill="#fff" textLength="124.5" lengthAdjust="spacingAndGlyphs">42.00 x 30.00 in</text>
<text x="1786" y="1037" font-size="18" fill="#fff" textLength="109.5" lengthAdjust="spacingAndGlyphs">(31.00, 16.29)</text>
<path d="M1117.4 1017.7 v25 M1125.3 1017.7 v25 M1133.4 1017.7 v25 M1112.2 1022.9 h25.5 M1112.2 1030.3 h25.5 M1112.2 1037.5 h25.5" stroke="#fff" stroke-width="1.6" fill="none" />
<path d="M1169.4 1017.7 v25 M1177.2 1017.7 v7.5 M1184.9 1017.7 v7.5 M1164.3 1022.9 h26 M1164.3 1030.3 h10.5 M1164.3 1037.5 h10.5" stroke="#fff" stroke-width="1.6" fill="none" />
<path d="M1179 1030 h6.5 q5.5 0 5.5 6 q0 6 -5.5 6 h-6.5 v-3.5 h6 q2 0 2 -2.5 q0 -2.5 -2 -2.5 h-6" stroke="#fff" stroke-width="1.4" fill="none" />
<path d="M1231 1043.5 h-10.5 v-25 h12 l7 7 v3 M1232.5 1018.5 v7 h7" stroke="#fff" stroke-width="1.5" fill="none" />
<path d="M1231 1030 h6.5 q5.5 0 5.5 6 q0 6 -5.5 6 h-6.5 v-3.5 h6 q2 0 2 -2.5 q0 -2.5 -2 -2.5 h-6" stroke="#fff" stroke-width="1.4" fill="none" />
<path d="M1272.5 1038 l16.5 -19 l6 5 l-3 3.5 M1271 1040.5 l3.5 -3.5 l3 2.5 l-3 3.5 z" stroke="#fff" stroke-width="1.5" fill="none" />
<path d="M1283 1030 h6.5 q5.5 0 5.5 6 q0 6 -5.5 6 h-6.5 v-3.5 h6 q2 0 2 -2.5 q0 -2.5 -2 -2.5 h-6" stroke="#fff" stroke-width="1.4" fill="none" />
<path d="M1324 1036 l16.5 -18.5 l7 6 l-3 3.5 M1322.5 1038.5 l3.5 -3.5 l3 2.5 l-3 3.5 z" stroke="#fff" stroke-width="1.5" fill="none" />
<path d="M1344 1030.5 q-7 -1.5 -8.5 4.5 q-0.5 6 5 7 q5.5 0.5 6.5 -5" stroke="#1f7fd0" stroke-width="2" fill="none" />
<path d="M1342 1026.5 l5.5 4 l-6 3.5 z" stroke="#1f7fd0" stroke-width="1" fill="#1f7fd0" />
<path d="M1373.5 1018.5 h26 v25 h-26 z M1373.5 1022 h26 M1378 1029.5 h17 l-3.5 -3 M1395 1036.5 h-17 l3.5 3" stroke="#fff" stroke-width="1.5" fill="none" />
<path d="M1416.5 1028.5 l6.25 6.5 l6.25 -6.5" stroke="#fff" stroke-width="1.8" fill="none" /></g>
<g id="edge"><rect x="1919.6" y="0" width="1.4" height="1060" fill="#000" />
<rect x="1919.6" y="84.5" width="1.4" height="102.5" fill="#f4f4f4" />
<rect x="1919.6" y="187" width="1.4" height="45" fill="#17a2b8" /></g>
</svg>
</div></body></html>
